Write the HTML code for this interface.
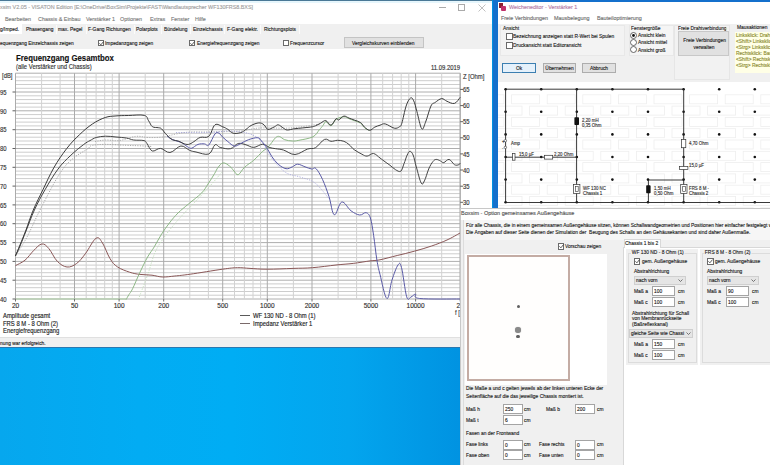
<!DOCTYPE html>
<html><head><meta charset="utf-8"><style>
html,body{margin:0;padding:0;width:770px;height:465px;overflow:hidden;font-family:"Liberation Sans", sans-serif;}
#w{position:absolute;left:0;top:0;width:770px;height:465px;overflow:hidden;}
#w div{-webkit-text-stroke:0.14px currentColor;}
</style></head><body><div id="w">
<div style="position:absolute;left:0px;top:0px;width:770px;height:465px;background:linear-gradient(90deg,#06a7ee 0%,#02acf3 30%,#00adf4 50%,#03a5ee 75%,#0092e1 100%);background-size:465px 465px;background-repeat:no-repeat;background-color:#0090e0;"></div><div style="position:absolute;left:0px;top:0px;width:492px;height:347px;background:#ffffff;"></div><div style="position:absolute;left:0px;top:0px;width:492px;height:1px;background:#4a7896;"></div><div style="position:absolute;left:0px;top:1px;width:492px;height:1.5px;background:#e6f6fc;"></div><div style="position:absolute;left:0px;top:3.9px;font-size:5.94px;line-height:7.1px;color:#a0a0a0;font-weight:normal;white-space:nowrap;transform:scaleX(0.909);transform-origin:left center;">xsim V2.05 - VISATON Edition [E:\OneDrive\BoxSim\Projekte\FAST\Wandlautsprecher WF130FRS8.BXS]</div><div style="position:absolute;left:438.5px;top:7px;width:7px;height:0.8px;background:#aaa;"></div><div style="position:absolute;left:457.5px;top:3.5px;width:7px;height:7px;background:transparent;border:0.8px solid #aaa;box-sizing:border-box;"></div><svg style="position:absolute;left:478px;top:3.5px" width="8" height="8"><path d="M0.5,0.5 L7.5,7.5 M7.5,0.5 L0.5,7.5" stroke="#b0b0b0" stroke-width="0.8"/></svg><div style="position:absolute;left:5px;top:16.2px;font-size:5.94px;line-height:7.1px;color:#7c7c7c;font-weight:normal;white-space:nowrap;transform:scaleX(0.909);transform-origin:left center;">Bearbeiten</div><div style="position:absolute;left:37.5px;top:16.2px;font-size:5.94px;line-height:7.1px;color:#7c7c7c;font-weight:normal;white-space:nowrap;transform:scaleX(0.909);transform-origin:left center;">Chassis &amp; Einbau</div><div style="position:absolute;left:86px;top:16.2px;font-size:5.94px;line-height:7.1px;color:#7c7c7c;font-weight:normal;white-space:nowrap;transform:scaleX(0.909);transform-origin:left center;">Verstärker 1</div><div style="position:absolute;left:120px;top:16.2px;font-size:5.94px;line-height:7.1px;color:#7c7c7c;font-weight:normal;white-space:nowrap;transform:scaleX(0.909);transform-origin:left center;">Optionen</div><div style="position:absolute;left:150px;top:16.2px;font-size:5.94px;line-height:7.1px;color:#7c7c7c;font-weight:normal;white-space:nowrap;transform:scaleX(0.909);transform-origin:left center;">Extras</div><div style="position:absolute;left:170.5px;top:16.2px;font-size:5.94px;line-height:7.1px;color:#7c7c7c;font-weight:normal;white-space:nowrap;transform:scaleX(0.909);transform-origin:left center;">Fenster</div><div style="position:absolute;left:194.5px;top:16.2px;font-size:5.94px;line-height:7.1px;color:#7c7c7c;font-weight:normal;white-space:nowrap;transform:scaleX(0.909);transform-origin:left center;">Hilfe</div><div style="position:absolute;left:0px;top:24px;width:492px;height:10px;background:#f0f0f0;"></div><div style="position:absolute;left:0px;top:24px;width:22px;height:10px;background:#ffffff;"></div><div style="position:absolute;left:55.5px;top:24.5px;width:1px;height:9.5px;background:#fbfbfb;"></div><div style="position:absolute;left:85.5px;top:24.5px;width:1px;height:9.5px;background:#fbfbfb;"></div><div style="position:absolute;left:134px;top:24.5px;width:1px;height:9.5px;background:#fbfbfb;"></div><div style="position:absolute;left:161px;top:24.5px;width:1px;height:9.5px;background:#fbfbfb;"></div><div style="position:absolute;left:190px;top:24.5px;width:1px;height:9.5px;background:#fbfbfb;"></div><div style="position:absolute;left:223.7px;top:24.5px;width:1px;height:9.5px;background:#fbfbfb;"></div><div style="position:absolute;left:260px;top:24.5px;width:1px;height:9.5px;background:#fbfbfb;"></div><div style="position:absolute;left:299px;top:24.5px;width:1px;height:9.5px;background:#fbfbfb;"></div><div style="position:absolute;left:0px;top:26.0px;font-size:5.68px;line-height:6.8px;color:#222;font-weight:normal;white-space:nowrap;transform:scaleX(0.862);transform-origin:left center;">g/Imped.</div><div style="position:absolute;left:25.5px;top:26.0px;font-size:5.68px;line-height:6.8px;color:#222;font-weight:normal;white-space:nowrap;transform:scaleX(0.862);transform-origin:left center;">Phasengang</div><div style="position:absolute;left:58px;top:26.0px;font-size:5.68px;line-height:6.8px;color:#222;font-weight:normal;white-space:nowrap;transform:scaleX(0.862);transform-origin:left center;">max. Pegel</div><div style="position:absolute;left:88px;top:26.0px;font-size:5.68px;line-height:6.8px;color:#222;font-weight:normal;white-space:nowrap;transform:scaleX(0.862);transform-origin:left center;">F-Gang Richtungen</div><div style="position:absolute;left:136px;top:26.0px;font-size:5.68px;line-height:6.8px;color:#222;font-weight:normal;white-space:nowrap;transform:scaleX(0.862);transform-origin:left center;">Polarplots</div><div style="position:absolute;left:164px;top:26.0px;font-size:5.68px;line-height:6.8px;color:#222;font-weight:normal;white-space:nowrap;transform:scaleX(0.862);transform-origin:left center;">Bündelung</div><div style="position:absolute;left:192.5px;top:26.0px;font-size:5.68px;line-height:6.8px;color:#222;font-weight:normal;white-space:nowrap;transform:scaleX(0.862);transform-origin:left center;">Einzelchassis</div><div style="position:absolute;left:226.5px;top:26.0px;font-size:5.68px;line-height:6.8px;color:#222;font-weight:normal;white-space:nowrap;transform:scaleX(0.862);transform-origin:left center;">F-Gang elektr.</div><div style="position:absolute;left:264px;top:26.0px;font-size:5.68px;line-height:6.8px;color:#222;font-weight:normal;white-space:nowrap;transform:scaleX(0.862);transform-origin:left center;">Richtungsplots</div><div style="position:absolute;left:0px;top:34px;width:492px;height:15px;background:#f0f0f0;"></div><div style="position:absolute;left:0px;top:39.8px;font-size:5.68px;line-height:6.8px;color:#222;font-weight:normal;white-space:nowrap;transform:scaleX(0.862);transform-origin:left center;">equenzgang Einzelchassis zeigen</div><div style="position:absolute;left:97.5px;top:39.5px;width:6.8px;height:6.5px;background:#fff;border:0.7px solid #6a6a6a;box-sizing:border-box;"></div><svg style="position:absolute;left:97.5px;top:39.5px" width="7" height="7"><polyline points="1.4,3.3 2.9,4.8 5.5,1.6" fill="none" stroke="#333" stroke-width="0.8"/></svg><div style="position:absolute;left:105px;top:39.8px;font-size:5.68px;line-height:6.8px;color:#222;font-weight:normal;white-space:nowrap;transform:scaleX(0.862);transform-origin:left center;">Impedanzgang zeigen</div><div style="position:absolute;left:188.5px;top:39.5px;width:6.8px;height:6.5px;background:#fff;border:0.7px solid #6a6a6a;box-sizing:border-box;"></div><svg style="position:absolute;left:188.5px;top:39.5px" width="7" height="7"><polyline points="1.4,3.3 2.9,4.8 5.5,1.6" fill="none" stroke="#333" stroke-width="0.8"/></svg><div style="position:absolute;left:196.5px;top:39.8px;font-size:5.68px;line-height:6.8px;color:#222;font-weight:normal;white-space:nowrap;transform:scaleX(0.862);transform-origin:left center;">Energiefrequenzgang zeigen</div><div style="position:absolute;left:282.5px;top:39.5px;width:6.8px;height:6.5px;background:#fff;border:0.7px solid #6a6a6a;box-sizing:border-box;"></div><div style="position:absolute;left:290px;top:39.8px;font-size:5.68px;line-height:6.8px;color:#222;font-weight:normal;white-space:nowrap;transform:scaleX(0.862);transform-origin:left center;">Frequenzcursor</div><div style="position:absolute;left:344.3px;top:37px;width:79.5px;height:11.3px;background:#e1e1e1;border:0.8px solid #c4c4c4;box-sizing:border-box;"></div><div style="position:absolute;left:351.5px;top:39.8px;font-size:5.68px;line-height:6.8px;color:#222;font-weight:normal;white-space:nowrap;transform:scaleX(0.862);transform-origin:left center;">Vergleichskurven einblenden</div><svg width="770" height="465" style="position:absolute;left:0;top:0">
<line x1="15.5" y1="299.0" x2="460.2" y2="299.0" stroke="#aeaeae" stroke-width="1"/>
<line x1="15.5" y1="295.2" x2="460.2" y2="295.2" stroke="#cdcdcd" stroke-width="1"/>
<line x1="15.5" y1="291.5" x2="460.2" y2="291.5" stroke="#cdcdcd" stroke-width="1"/>
<line x1="15.5" y1="287.7" x2="460.2" y2="287.7" stroke="#cdcdcd" stroke-width="1"/>
<line x1="15.5" y1="283.9" x2="460.2" y2="283.9" stroke="#cdcdcd" stroke-width="1"/>
<line x1="15.5" y1="280.2" x2="460.2" y2="280.2" stroke="#aeaeae" stroke-width="1"/>
<line x1="15.5" y1="276.4" x2="460.2" y2="276.4" stroke="#cdcdcd" stroke-width="1"/>
<line x1="15.5" y1="272.7" x2="460.2" y2="272.7" stroke="#cdcdcd" stroke-width="1"/>
<line x1="15.5" y1="268.9" x2="460.2" y2="268.9" stroke="#cdcdcd" stroke-width="1"/>
<line x1="15.5" y1="265.1" x2="460.2" y2="265.1" stroke="#cdcdcd" stroke-width="1"/>
<line x1="15.5" y1="261.4" x2="460.2" y2="261.4" stroke="#aeaeae" stroke-width="1"/>
<line x1="15.5" y1="257.6" x2="460.2" y2="257.6" stroke="#cdcdcd" stroke-width="1"/>
<line x1="15.5" y1="253.8" x2="460.2" y2="253.8" stroke="#cdcdcd" stroke-width="1"/>
<line x1="15.5" y1="250.1" x2="460.2" y2="250.1" stroke="#cdcdcd" stroke-width="1"/>
<line x1="15.5" y1="246.3" x2="460.2" y2="246.3" stroke="#cdcdcd" stroke-width="1"/>
<line x1="15.5" y1="242.6" x2="460.2" y2="242.6" stroke="#aeaeae" stroke-width="1"/>
<line x1="15.5" y1="238.8" x2="460.2" y2="238.8" stroke="#cdcdcd" stroke-width="1"/>
<line x1="15.5" y1="235.0" x2="460.2" y2="235.0" stroke="#cdcdcd" stroke-width="1"/>
<line x1="15.5" y1="231.3" x2="460.2" y2="231.3" stroke="#cdcdcd" stroke-width="1"/>
<line x1="15.5" y1="227.5" x2="460.2" y2="227.5" stroke="#cdcdcd" stroke-width="1"/>
<line x1="15.5" y1="223.7" x2="460.2" y2="223.7" stroke="#aeaeae" stroke-width="1"/>
<line x1="15.5" y1="220.0" x2="460.2" y2="220.0" stroke="#cdcdcd" stroke-width="1"/>
<line x1="15.5" y1="216.2" x2="460.2" y2="216.2" stroke="#cdcdcd" stroke-width="1"/>
<line x1="15.5" y1="212.5" x2="460.2" y2="212.5" stroke="#cdcdcd" stroke-width="1"/>
<line x1="15.5" y1="208.7" x2="460.2" y2="208.7" stroke="#cdcdcd" stroke-width="1"/>
<line x1="15.5" y1="204.9" x2="460.2" y2="204.9" stroke="#aeaeae" stroke-width="1"/>
<line x1="15.5" y1="201.2" x2="460.2" y2="201.2" stroke="#cdcdcd" stroke-width="1"/>
<line x1="15.5" y1="197.4" x2="460.2" y2="197.4" stroke="#cdcdcd" stroke-width="1"/>
<line x1="15.5" y1="193.6" x2="460.2" y2="193.6" stroke="#cdcdcd" stroke-width="1"/>
<line x1="15.5" y1="189.9" x2="460.2" y2="189.9" stroke="#cdcdcd" stroke-width="1"/>
<line x1="15.5" y1="186.1" x2="460.2" y2="186.1" stroke="#aeaeae" stroke-width="1"/>
<line x1="15.5" y1="182.3" x2="460.2" y2="182.3" stroke="#cdcdcd" stroke-width="1"/>
<line x1="15.5" y1="178.6" x2="460.2" y2="178.6" stroke="#cdcdcd" stroke-width="1"/>
<line x1="15.5" y1="174.8" x2="460.2" y2="174.8" stroke="#cdcdcd" stroke-width="1"/>
<line x1="15.5" y1="171.1" x2="460.2" y2="171.1" stroke="#cdcdcd" stroke-width="1"/>
<line x1="15.5" y1="167.3" x2="460.2" y2="167.3" stroke="#aeaeae" stroke-width="1"/>
<line x1="15.5" y1="163.5" x2="460.2" y2="163.5" stroke="#cdcdcd" stroke-width="1"/>
<line x1="15.5" y1="159.8" x2="460.2" y2="159.8" stroke="#cdcdcd" stroke-width="1"/>
<line x1="15.5" y1="156.0" x2="460.2" y2="156.0" stroke="#cdcdcd" stroke-width="1"/>
<line x1="15.5" y1="152.2" x2="460.2" y2="152.2" stroke="#cdcdcd" stroke-width="1"/>
<line x1="15.5" y1="148.5" x2="460.2" y2="148.5" stroke="#aeaeae" stroke-width="1"/>
<line x1="15.5" y1="144.7" x2="460.2" y2="144.7" stroke="#cdcdcd" stroke-width="1"/>
<line x1="15.5" y1="141.0" x2="460.2" y2="141.0" stroke="#cdcdcd" stroke-width="1"/>
<line x1="15.5" y1="137.2" x2="460.2" y2="137.2" stroke="#cdcdcd" stroke-width="1"/>
<line x1="15.5" y1="133.4" x2="460.2" y2="133.4" stroke="#cdcdcd" stroke-width="1"/>
<line x1="15.5" y1="129.7" x2="460.2" y2="129.7" stroke="#aeaeae" stroke-width="1"/>
<line x1="15.5" y1="125.9" x2="460.2" y2="125.9" stroke="#cdcdcd" stroke-width="1"/>
<line x1="15.5" y1="122.1" x2="460.2" y2="122.1" stroke="#cdcdcd" stroke-width="1"/>
<line x1="15.5" y1="118.4" x2="460.2" y2="118.4" stroke="#cdcdcd" stroke-width="1"/>
<line x1="15.5" y1="114.6" x2="460.2" y2="114.6" stroke="#cdcdcd" stroke-width="1"/>
<line x1="15.5" y1="110.8" x2="460.2" y2="110.8" stroke="#aeaeae" stroke-width="1"/>
<line x1="15.5" y1="107.1" x2="460.2" y2="107.1" stroke="#cdcdcd" stroke-width="1"/>
<line x1="15.5" y1="103.3" x2="460.2" y2="103.3" stroke="#cdcdcd" stroke-width="1"/>
<line x1="15.5" y1="99.6" x2="460.2" y2="99.6" stroke="#cdcdcd" stroke-width="1"/>
<line x1="15.5" y1="95.8" x2="460.2" y2="95.8" stroke="#cdcdcd" stroke-width="1"/>
<line x1="15.5" y1="92.0" x2="460.2" y2="92.0" stroke="#aeaeae" stroke-width="1"/>
<line x1="15.5" y1="88.3" x2="460.2" y2="88.3" stroke="#cdcdcd" stroke-width="1"/>
<line x1="15.5" y1="84.5" x2="460.2" y2="84.5" stroke="#cdcdcd" stroke-width="1"/>
<line x1="15.5" y1="80.7" x2="460.2" y2="80.7" stroke="#cdcdcd" stroke-width="1"/>
<line x1="15.5" y1="77.0" x2="460.2" y2="77.0" stroke="#cdcdcd" stroke-width="1"/>
<line x1="15.5" y1="73.2" x2="460.2" y2="73.2" stroke="#aeaeae" stroke-width="1"/>
<line x1="15.5" y1="73.2" x2="15.5" y2="299" stroke="#ababab" stroke-width="1"/>
<line x1="41.6" y1="73.2" x2="41.6" y2="299" stroke="#d2d2d2" stroke-width="1"/>
<line x1="60.1" y1="73.2" x2="60.1" y2="299" stroke="#d2d2d2" stroke-width="1"/>
<line x1="74.5" y1="73.2" x2="74.5" y2="299" stroke="#ababab" stroke-width="1"/>
<line x1="86.2" y1="73.2" x2="86.2" y2="299" stroke="#d2d2d2" stroke-width="1"/>
<line x1="96.1" y1="73.2" x2="96.1" y2="299" stroke="#d2d2d2" stroke-width="1"/>
<line x1="104.7" y1="73.2" x2="104.7" y2="299" stroke="#d2d2d2" stroke-width="1"/>
<line x1="112.3" y1="73.2" x2="112.3" y2="299" stroke="#d2d2d2" stroke-width="1"/>
<line x1="119.1" y1="73.2" x2="119.1" y2="299" stroke="#ababab" stroke-width="1"/>
<line x1="145.2" y1="73.2" x2="145.2" y2="299" stroke="#d2d2d2" stroke-width="1"/>
<line x1="163.7" y1="73.2" x2="163.7" y2="299" stroke="#ababab" stroke-width="1"/>
<line x1="189.8" y1="73.2" x2="189.8" y2="299" stroke="#d2d2d2" stroke-width="1"/>
<line x1="208.4" y1="73.2" x2="208.4" y2="299" stroke="#d2d2d2" stroke-width="1"/>
<line x1="222.7" y1="73.2" x2="222.7" y2="299" stroke="#ababab" stroke-width="1"/>
<line x1="234.5" y1="73.2" x2="234.5" y2="299" stroke="#d2d2d2" stroke-width="1"/>
<line x1="244.4" y1="73.2" x2="244.4" y2="299" stroke="#d2d2d2" stroke-width="1"/>
<line x1="253.0" y1="73.2" x2="253.0" y2="299" stroke="#d2d2d2" stroke-width="1"/>
<line x1="260.6" y1="73.2" x2="260.6" y2="299" stroke="#d2d2d2" stroke-width="1"/>
<line x1="267.3" y1="73.2" x2="267.3" y2="299" stroke="#ababab" stroke-width="1"/>
<line x1="293.4" y1="73.2" x2="293.4" y2="299" stroke="#d2d2d2" stroke-width="1"/>
<line x1="312.0" y1="73.2" x2="312.0" y2="299" stroke="#ababab" stroke-width="1"/>
<line x1="338.1" y1="73.2" x2="338.1" y2="299" stroke="#d2d2d2" stroke-width="1"/>
<line x1="356.6" y1="73.2" x2="356.6" y2="299" stroke="#d2d2d2" stroke-width="1"/>
<line x1="370.9" y1="73.2" x2="370.9" y2="299" stroke="#ababab" stroke-width="1"/>
<line x1="382.7" y1="73.2" x2="382.7" y2="299" stroke="#d2d2d2" stroke-width="1"/>
<line x1="392.6" y1="73.2" x2="392.6" y2="299" stroke="#d2d2d2" stroke-width="1"/>
<line x1="401.2" y1="73.2" x2="401.2" y2="299" stroke="#d2d2d2" stroke-width="1"/>
<line x1="408.8" y1="73.2" x2="408.8" y2="299" stroke="#d2d2d2" stroke-width="1"/>
<line x1="415.6" y1="73.2" x2="415.6" y2="299" stroke="#ababab" stroke-width="1"/>
<line x1="441.7" y1="73.2" x2="441.7" y2="299" stroke="#d2d2d2" stroke-width="1"/>
<line x1="460.2" y1="73.2" x2="460.2" y2="299" stroke="#ababab" stroke-width="1"/>
<line x1="460.2" y1="73.2" x2="460.2" y2="299" stroke="#ababab" stroke-width="1"/>
<path d="M15.4,256.0 C17.5,252.6 22.4,245.6 27.0,237.0 C31.6,228.4 35.1,219.3 41.0,208.0 C46.9,196.7 53.8,182.8 59.5,174.0 C65.2,165.2 67.4,163.5 72.4,159.0 C77.4,154.5 83.9,151.4 87.4,149.0 C90.9,146.6 88.7,146.3 92.0,145.5 C95.3,144.7 99.4,144.4 105.6,144.4 C111.8,144.4 120.2,145.0 126.4,145.3 C132.6,145.6 135.4,145.6 140.0,145.8 C144.6,146.0 149.8,146.4 152.0,146.5" fill="none" stroke="#a0a0a0" stroke-width="0.9" stroke-linejoin="round" stroke-opacity="1" stroke-dasharray="1.2,1.3"/>
<path d="M95.0,141.6 C96.9,141.3 101.3,140.2 105.6,140.0 C109.9,139.8 113.6,141.2 119.0,140.6 C124.4,140.0 130.5,137.0 135.7,136.4 C140.9,135.8 143.1,137.4 148.0,137.5 C152.9,137.6 158.0,137.6 163.0,137.0 C168.0,136.4 171.1,134.9 176.0,134.0 C180.9,133.1 183.9,132.4 190.0,132.0 C196.1,131.6 201.0,132.1 210.0,131.9 C219.0,131.7 231.0,131.7 240.0,131.0 C249.0,130.3 251.0,128.5 260.0,128.0 C269.0,127.5 279.2,128.7 290.0,128.0 C300.8,127.3 314.6,124.7 320.0,124.0" fill="none" stroke="#a8a8a8" stroke-width="0.9" stroke-linejoin="round" stroke-opacity="1" stroke-dasharray="1.2,1.3"/>
<path d="M176.0,132.5 C182.1,132.5 200.3,132.8 210.0,132.5 C219.7,132.2 222.8,130.7 230.0,131.0 C237.2,131.3 244.2,132.0 250.0,134.0 C255.8,136.0 258.4,138.0 262.0,142.0 C265.6,146.0 265.9,150.6 270.0,156.0 C274.1,161.4 279.6,168.2 285.0,172.0 C290.4,175.8 294.6,175.0 300.0,177.0 C305.4,179.0 309.6,178.9 315.0,183.0 C320.4,187.1 327.3,196.9 330.0,200.0" fill="none" stroke="#a8a8dc" stroke-width="0.9" stroke-linejoin="round" stroke-opacity="1" stroke-dasharray="1.2,1.3"/>
<path d="M138.5,299.0 C140.1,294.7 144.6,283.4 147.6,275.0 C150.6,266.6 152.0,259.4 155.0,252.6 C158.0,245.8 159.9,243.4 164.0,237.5 C168.1,231.6 172.4,226.4 178.0,220.0 C183.6,213.6 189.2,208.1 195.0,202.0 C200.8,195.9 205.1,191.4 210.0,186.0 C214.9,180.6 219.8,174.5 222.0,172.0" fill="none" stroke="#c0dcb8" stroke-width="0.9" stroke-linejoin="round" stroke-opacity="1" stroke-dasharray="1.2,1.3"/>
<path d="M15.5,265.6 C17.2,264.6 21.7,262.9 25.0,260.2 C28.3,257.5 30.7,253.4 33.7,250.5 C36.7,247.6 39.1,244.4 41.8,244.0 C44.5,243.6 45.9,245.3 48.7,248.4 C51.5,251.5 54.0,258.0 57.3,261.3 C60.6,264.6 63.5,266.6 67.0,267.0 C70.5,267.4 73.4,265.8 76.7,263.4 C80.0,261.0 81.8,258.3 85.3,253.8 C88.8,249.3 92.9,240.2 96.0,238.3 C99.1,236.4 100.0,239.3 102.5,243.0 C105.0,246.7 107.3,254.3 110.0,258.6 C112.7,262.9 114.0,264.5 117.5,266.9 C121.0,269.3 125.5,270.8 129.6,272.2 C133.7,273.6 136.0,273.9 140.0,274.4 C144.0,274.9 147.9,274.7 152.0,275.2 C156.1,275.7 158.6,276.9 162.7,277.0 C166.8,277.1 169.9,276.5 174.8,276.0 C179.8,275.5 181.6,275.4 190.2,274.2 C198.8,273.0 214.0,270.4 222.5,269.2 C231.0,268.0 232.6,267.8 237.5,267.7 C242.4,267.6 244.7,268.1 250.0,268.4 C255.3,268.7 259.5,269.2 267.2,269.2 C274.9,269.2 284.9,268.7 293.0,268.4 C301.1,268.1 304.7,268.3 312.4,267.7 C320.1,267.1 328.7,265.8 336.0,265.0 C343.3,264.2 347.1,264.1 353.2,263.4 C359.3,262.7 365.2,261.5 370.0,260.9 C374.8,260.3 375.1,260.8 380.0,259.8 C384.9,258.8 391.0,257.0 397.2,255.5 C403.4,254.0 408.2,252.9 414.4,251.2 C420.6,249.5 425.7,248.0 431.6,246.0 C437.5,244.0 441.9,242.3 447.0,240.0 C452.1,237.7 457.7,234.3 460.0,233.0" fill="none" stroke="#8a5858" stroke-width="1.0" stroke-linejoin="round" stroke-opacity="1"/>
<line x1="15.5" y1="299" x2="126.5" y2="299" stroke="#a8cca0" stroke-width="1.2"/>
<path d="M126.2,299.5 C126.7,298.6 127.8,296.4 129.0,294.5 C130.2,292.6 130.6,292.7 132.6,288.7 C134.6,284.7 137.3,277.9 140.0,272.2 C142.7,266.5 145.0,261.6 147.6,257.0 C150.2,252.4 151.9,250.8 154.3,246.8 C156.7,242.8 158.3,239.3 161.0,235.0 C163.7,230.7 166.3,227.0 169.4,223.0 C172.5,219.0 174.5,216.5 178.0,213.0 C181.5,209.5 184.5,207.4 188.7,203.8 C192.9,200.2 198.1,196.6 201.6,193.0 C205.1,189.4 205.7,187.5 208.0,184.0 C210.3,180.5 212.7,176.7 214.5,173.7 C216.3,170.7 216.5,169.4 218.0,167.5 C219.5,165.6 221.0,163.2 223.1,162.9 C225.2,162.6 227.6,164.6 229.6,166.1 C231.6,167.6 232.5,169.5 234.0,171.0 C235.5,172.5 236.3,175.4 238.2,174.7 C240.1,174.0 241.8,169.8 244.6,167.2 C247.4,164.6 250.4,163.2 253.7,160.3 C257.0,157.4 260.4,153.4 262.7,151.3 C265.0,149.2 265.2,150.0 266.6,148.7 C268.0,147.4 268.9,146.2 270.5,144.2 C272.1,142.2 274.0,139.1 275.6,137.7 C277.2,136.3 277.9,136.1 279.5,136.5 C281.1,136.9 282.4,138.9 284.7,139.7 C287.0,140.5 289.8,140.9 292.4,141.0 C295.0,141.1 295.2,141.1 298.9,140.3 C302.6,139.5 309.2,138.7 312.9,136.8 C316.6,134.9 317.5,131.8 319.4,129.7 C321.3,127.6 322.0,126.7 323.2,125.2 C324.4,123.7 324.6,121.5 326.0,121.6 C327.4,121.7 329.2,126.2 331.0,125.8 C332.8,125.4 333.8,120.9 336.1,119.3 C338.4,117.7 341.6,116.9 343.9,116.8 C346.2,116.7 347.1,118.0 349.0,118.7 C350.9,119.4 352.1,119.8 354.2,120.6 C356.3,121.4 358.7,121.9 360.6,123.2 C362.5,124.5 362.9,126.4 364.5,127.7 C366.1,129.0 368.5,130.0 369.4,130.5" fill="none" stroke="#88b480" stroke-width="0.95" stroke-linejoin="round" stroke-opacity="1"/>
<path d="M15.4,256.0 C16.2,254.2 18.1,250.5 20.0,246.0 C21.9,241.5 23.4,237.5 26.0,231.0 C28.6,224.5 31.0,217.5 34.4,210.0 C37.8,202.5 40.9,197.0 45.1,189.6 C49.3,182.2 53.4,175.3 58.0,169.1 C62.6,162.9 66.3,159.6 70.9,155.2 C75.5,150.8 80.4,147.0 83.8,144.4 C87.2,141.8 87.8,141.8 90.0,140.6 C92.2,139.4 93.4,138.3 96.2,137.5 C99.0,136.7 102.0,136.3 105.6,136.2 C109.2,136.1 112.3,136.7 116.0,137.0 C119.7,137.3 123.2,137.5 126.4,138.0 C129.6,138.5 130.4,139.5 133.6,140.0 C136.8,140.5 141.6,139.9 144.0,140.6 C146.4,141.3 145.6,141.8 147.1,143.7 C148.6,145.6 149.9,150.2 152.3,151.0 C154.7,151.8 157.4,148.1 160.6,148.4 C163.8,148.7 166.3,152.9 170.0,152.5 C173.7,152.1 177.4,146.4 180.9,146.0 C184.4,145.6 186.8,149.2 189.5,150.3 C192.2,151.4 192.5,151.3 196.0,152.0 C199.5,152.7 205.4,155.3 208.8,154.0 C212.2,152.7 212.9,146.0 215.0,144.8 C217.1,143.6 217.4,146.7 220.2,147.4 C223.0,148.1 227.3,149.4 230.5,148.7 C233.7,148.0 235.4,144.2 238.2,143.5 C241.0,142.8 243.2,144.1 246.0,144.8 C248.8,145.5 250.7,147.5 253.7,147.4 C256.7,147.3 259.9,144.2 262.7,144.2 C265.5,144.2 266.9,146.6 269.2,147.4 C271.5,148.2 273.0,148.2 275.6,148.7 C278.2,149.2 279.9,149.0 283.4,150.0 C286.9,151.0 290.6,154.7 295.0,154.5 C299.4,154.3 304.0,150.2 307.7,149.0 C311.4,147.8 312.5,149.4 315.5,147.7 C318.5,146.0 321.7,140.6 324.5,139.4 C327.3,138.2 328.7,141.1 331.0,141.3 C333.3,141.5 335.1,140.3 337.4,140.3 C339.7,140.3 341.8,140.5 343.9,141.3 C346.0,142.1 347.1,143.0 349.0,144.5 C350.9,146.0 351.9,148.0 354.2,149.7 C356.5,151.4 359.6,153.0 361.9,154.2 C364.2,155.4 365.0,156.2 367.1,156.1 C369.2,156.0 371.2,153.2 373.5,153.5 C375.8,153.8 378.1,156.7 380.0,158.0 C381.9,159.3 382.2,159.7 384.0,161.0 C385.8,162.3 387.9,163.8 390.0,165.3 C392.1,166.8 393.5,168.5 395.4,169.6 C397.3,170.7 399.3,172.3 400.8,171.2 C402.3,170.1 402.8,166.6 404.0,163.7 C405.2,160.8 406.1,157.2 407.2,155.0 C408.3,152.8 408.8,151.3 409.9,151.3 C411.0,151.3 411.9,152.2 413.1,155.0 C414.3,157.8 414.8,161.9 416.3,166.9 C417.8,171.9 419.7,180.5 421.2,183.0 C422.7,185.5 423.0,183.4 424.4,180.9 C425.8,178.4 427.2,172.5 428.7,169.0 C430.2,165.5 431.6,163.2 433.0,161.5 C434.4,159.8 434.8,159.5 436.2,159.4 C437.6,159.3 439.1,160.4 440.5,161.0 C441.9,161.6 442.3,162.9 443.8,162.6 C445.3,162.3 447.2,159.0 449.1,159.4 C451.0,159.8 452.8,163.7 454.5,164.7 C456.2,165.7 457.8,165.0 458.8,164.7 C459.8,164.4 459.9,163.4 460.2,163.1" fill="none" stroke="#444444" stroke-width="1.0" stroke-linejoin="round" stroke-opacity="1"/>
<path d="M167.0,135.8 C168.0,136.5 169.8,138.4 172.3,139.6 C174.8,140.8 178.2,141.0 180.9,142.3 C183.6,143.6 185.4,145.5 187.3,146.6 C189.2,147.7 189.7,148.6 191.6,148.2 C193.5,147.8 195.7,145.2 198.0,144.4 C200.3,143.6 202.6,143.8 204.5,143.9 C206.4,144.0 206.9,146.8 208.8,145.0 C210.7,143.2 213.2,136.0 215.0,133.9 C216.8,131.8 217.5,132.6 218.9,133.2 C220.3,133.8 221.1,135.6 222.7,137.1 C224.3,138.6 225.8,140.0 227.9,141.6 C230.0,143.2 232.1,145.8 234.4,146.1 C236.7,146.4 238.3,144.7 240.8,143.5 C243.3,142.3 245.5,140.7 248.5,139.7 C251.5,138.7 255.3,137.5 257.6,137.7 C259.9,137.9 259.9,139.3 261.5,141.0 C263.1,142.7 264.7,144.6 266.6,147.4 C268.5,150.2 269.7,153.5 271.8,156.5 C273.9,159.5 275.6,162.0 278.2,164.2 C280.8,166.4 283.4,168.2 286.0,168.7 C288.6,169.2 290.3,167.6 292.4,166.8 C294.5,166.0 295.3,164.2 297.6,164.2 C299.9,164.2 302.5,165.9 305.0,166.8 C307.5,167.7 309.7,168.7 311.7,169.0 C313.7,169.3 314.1,166.7 316.0,168.6 C317.9,170.5 320.2,174.4 322.5,179.4 C324.8,184.4 326.9,190.2 329.0,196.6 C331.1,203.0 332.0,213.8 334.3,214.8 C336.6,215.8 338.8,202.7 341.8,202.0 C344.8,201.3 347.8,208.5 351.0,210.8 C354.2,213.1 357.0,214.7 359.7,215.0 C362.4,215.3 364.1,212.2 366.0,212.7 C367.9,213.2 369.0,213.9 370.4,218.0 C371.8,222.1 372.4,227.7 373.6,235.3 C374.8,242.9 375.7,253.0 376.9,260.0 C378.1,267.0 378.2,267.5 380.0,274.4 C381.8,281.3 384.7,297.5 386.9,298.5 C389.1,299.5 390.0,286.0 392.0,280.0 C394.0,274.0 396.3,267.2 398.0,265.0 C399.7,262.8 399.9,261.8 401.5,267.5 C403.1,273.2 405.0,291.5 406.7,296.8 C408.4,302.1 409.4,297.5 411.0,297.0 C412.6,296.5 414.1,293.9 415.6,294.2 C417.1,294.5 411.6,297.6 419.6,298.5 C427.6,299.4 452.9,298.9 460.2,299.0" fill="none" stroke="#5a5aa6" stroke-width="1.0" stroke-linejoin="round" stroke-opacity="1"/>
<path d="M15.4,256.0 C16.2,254.0 18.1,249.7 20.0,245.0 C21.9,240.3 23.6,236.3 26.0,230.0 C28.4,223.7 30.2,217.3 33.3,210.0 C36.4,202.7 39.3,197.2 43.0,189.6 C46.7,182.0 49.5,175.4 53.7,168.0 C57.9,160.6 62.0,154.7 66.6,148.7 C71.2,142.7 74.9,139.1 79.5,134.7 C84.1,130.3 87.8,127.1 92.4,124.0 C97.0,120.9 101.2,118.9 105.3,117.5 C109.4,116.1 110.9,116.4 115.0,116.0 C119.1,115.6 123.0,115.6 128.3,115.5 C133.6,115.4 140.6,114.4 144.3,115.4 C148.0,116.4 147.1,118.8 148.6,120.8 C150.1,122.8 150.7,125.5 152.4,126.7 C154.1,127.9 156.7,127.3 158.3,127.7 C159.9,128.1 159.9,127.4 161.5,128.8 C163.1,130.2 165.1,133.4 167.0,135.3 C168.9,137.2 170.2,138.5 172.3,139.6 C174.4,140.7 176.8,140.5 178.7,141.2 C180.6,141.9 181.3,142.7 183.0,143.3 C184.7,143.9 186.5,144.7 188.4,144.4 C190.3,144.1 191.7,143.0 193.8,141.7 C195.9,140.4 197.5,138.4 200.2,137.4 C202.9,136.4 206.1,138.6 208.8,136.3 C211.5,134.0 212.5,126.5 215.0,124.8 C217.5,123.1 220.4,126.0 222.7,126.8 C225.0,127.6 226.0,128.2 227.9,129.4 C229.8,130.6 230.8,132.6 233.1,133.2 C235.4,133.8 238.5,133.3 240.8,132.6 C243.1,131.9 244.1,130.7 246.0,129.4 C247.9,128.1 248.8,126.7 251.1,125.5 C253.4,124.3 256.6,123.0 258.9,122.9 C261.2,122.8 262.4,123.6 264.0,124.8 C265.6,126.0 266.0,129.0 267.9,129.4 C269.8,129.8 272.5,127.6 274.4,126.8 C276.3,126.0 276.6,124.6 278.2,124.8 C279.8,125.0 281.8,127.2 283.4,128.1 C285.0,129.0 285.2,129.9 287.3,130.0 C289.4,130.1 290.9,129.2 295.0,128.7 C299.1,128.2 306.6,127.6 310.3,127.1 C314.0,126.6 313.6,126.5 315.5,125.8 C317.4,125.1 318.7,124.1 320.6,123.2 C322.5,122.3 323.9,120.2 325.8,120.6 C327.7,121.0 329.1,125.5 331.0,125.2 C332.9,124.9 334.7,119.6 336.1,118.7 C337.5,117.8 337.3,120.5 338.7,120.0 C340.1,119.5 342.0,116.4 343.9,116.1 C345.8,115.8 347.1,117.4 349.0,118.1 C350.9,118.8 352.1,119.2 354.2,120.0 C356.3,120.8 358.7,121.3 360.6,122.6 C362.5,123.9 362.9,125.7 364.5,127.1 C366.1,128.5 367.8,130.3 369.7,130.3 C371.6,130.3 372.9,128.0 374.8,127.1 C376.7,126.2 378.1,125.8 380.0,125.2 C381.9,124.6 382.6,123.4 385.2,123.9 C387.8,124.4 391.7,127.7 394.3,128.2 C396.9,128.7 398.3,127.5 399.7,126.6 C401.1,125.7 400.6,127.0 401.8,123.3 C403.0,119.6 404.6,110.6 406.1,106.1 C407.6,101.6 409.0,99.1 410.4,98.1 C411.8,97.1 412.5,98.4 413.7,100.8 C414.9,103.2 415.5,106.5 416.9,111.5 C418.3,116.5 420.2,126.8 421.7,128.7 C423.2,130.6 423.8,126.4 425.5,122.3 C427.2,118.2 429.2,109.7 430.9,106.1 C432.6,102.5 433.3,103.8 435.2,102.4 C437.1,101.1 439.5,98.8 441.6,98.6 C443.7,98.4 444.7,100.4 447.0,101.3 C449.3,102.2 452.1,104.1 454.5,103.4 C456.9,102.7 459.2,98.4 460.2,97.3" fill="none" stroke="#3c3c3c" stroke-width="1.0" stroke-linejoin="round" stroke-opacity="1"/>
<line x1="12.5" y1="299.0" x2="15.5" y2="299.0" stroke="#606060" stroke-width="1"/>
<line x1="12.5" y1="280.2" x2="15.5" y2="280.2" stroke="#606060" stroke-width="1"/>
<line x1="12.5" y1="261.4" x2="15.5" y2="261.4" stroke="#606060" stroke-width="1"/>
<line x1="12.5" y1="242.6" x2="15.5" y2="242.6" stroke="#606060" stroke-width="1"/>
<line x1="12.5" y1="223.7" x2="15.5" y2="223.7" stroke="#606060" stroke-width="1"/>
<line x1="12.5" y1="204.9" x2="15.5" y2="204.9" stroke="#606060" stroke-width="1"/>
<line x1="12.5" y1="186.1" x2="15.5" y2="186.1" stroke="#606060" stroke-width="1"/>
<line x1="12.5" y1="167.3" x2="15.5" y2="167.3" stroke="#606060" stroke-width="1"/>
<line x1="12.5" y1="148.5" x2="15.5" y2="148.5" stroke="#606060" stroke-width="1"/>
<line x1="12.5" y1="129.7" x2="15.5" y2="129.7" stroke="#606060" stroke-width="1"/>
<line x1="12.5" y1="110.8" x2="15.5" y2="110.8" stroke="#606060" stroke-width="1"/>
<line x1="12.5" y1="92.0" x2="15.5" y2="92.0" stroke="#606060" stroke-width="1"/>
<line x1="15.5" y1="299" x2="15.5" y2="301.5" stroke="#707070" stroke-width="1"/>
<line x1="74.5" y1="299" x2="74.5" y2="301.5" stroke="#707070" stroke-width="1"/>
<line x1="119.1" y1="299" x2="119.1" y2="301.5" stroke="#707070" stroke-width="1"/>
<line x1="163.7" y1="299" x2="163.7" y2="301.5" stroke="#707070" stroke-width="1"/>
<line x1="222.7" y1="299" x2="222.7" y2="301.5" stroke="#707070" stroke-width="1"/>
<line x1="267.3" y1="299" x2="267.3" y2="301.5" stroke="#707070" stroke-width="1"/>
<line x1="312.0" y1="299" x2="312.0" y2="301.5" stroke="#707070" stroke-width="1"/>
<line x1="370.9" y1="299" x2="370.9" y2="301.5" stroke="#707070" stroke-width="1"/>
<line x1="415.6" y1="299" x2="415.6" y2="301.5" stroke="#707070" stroke-width="1"/>
<line x1="460.2" y1="299" x2="460.2" y2="301.5" stroke="#707070" stroke-width="1"/>
<line x1="460.2" y1="282.9" x2="463.2" y2="282.9" stroke="#606060" stroke-width="1"/>
<line x1="460.2" y1="266.8" x2="463.2" y2="266.8" stroke="#606060" stroke-width="1"/>
<line x1="460.2" y1="250.6" x2="463.2" y2="250.6" stroke="#606060" stroke-width="1"/>
<line x1="460.2" y1="234.5" x2="463.2" y2="234.5" stroke="#606060" stroke-width="1"/>
<line x1="460.2" y1="218.4" x2="463.2" y2="218.4" stroke="#606060" stroke-width="1"/>
<line x1="460.2" y1="202.3" x2="463.2" y2="202.3" stroke="#606060" stroke-width="1"/>
<line x1="460.2" y1="186.2" x2="463.2" y2="186.2" stroke="#606060" stroke-width="1"/>
<line x1="460.2" y1="170.0" x2="463.2" y2="170.0" stroke="#606060" stroke-width="1"/>
<line x1="460.2" y1="153.9" x2="463.2" y2="153.9" stroke="#606060" stroke-width="1"/>
<line x1="460.2" y1="137.8" x2="463.2" y2="137.8" stroke="#606060" stroke-width="1"/>
<line x1="460.2" y1="121.7" x2="463.2" y2="121.7" stroke="#606060" stroke-width="1"/>
<line x1="460.2" y1="105.6" x2="463.2" y2="105.6" stroke="#606060" stroke-width="1"/>
<line x1="460.2" y1="89.4" x2="463.2" y2="89.4" stroke="#606060" stroke-width="1"/>
</svg><div style="position:absolute;left:15.5px;top:53.7px;font-size:7.80px;line-height:9.4px;color:#111;font-weight:bold;white-space:nowrap;transform:scaleX(0.91);transform-origin:left center;font-size:8.57px;top:54.1px;line-height:9px;">Frequenzgang Gesamtbox</div><div style="position:absolute;left:15.5px;top:63.3px;font-size:6.49px;line-height:7.8px;color:#333;font-weight:normal;white-space:nowrap;transform:scaleX(0.909);transform-origin:left center;">(alle Verstärker und Chassis)</div><div style="position:absolute;left:431px;top:63.6px;font-size:6.49px;line-height:7.8px;color:#333;font-weight:normal;white-space:nowrap;transform:scaleX(0.909);transform-origin:left center;">11.09.2019</div><div style="position:absolute;left:2px;top:72.2px;font-size:6.49px;line-height:7.8px;color:#333;font-weight:normal;white-space:nowrap;transform:scaleX(0.909);transform-origin:left center;">[dB]</div><div style="position:absolute;left:463px;top:72.6px;font-size:6.49px;line-height:7.8px;color:#333;font-weight:normal;white-space:nowrap;transform:scaleX(0.909);transform-origin:left center;">Z [Ohm]</div><div style="position:absolute;left:0px;top:295.6px;font-size:6.49px;line-height:7.8px;color:#333;font-weight:normal;white-space:nowrap;transform:scaleX(0.909);transform-origin:left center;">40</div><div style="position:absolute;left:0px;top:276.8px;font-size:6.49px;line-height:7.8px;color:#333;font-weight:normal;white-space:nowrap;transform:scaleX(0.909);transform-origin:left center;">45</div><div style="position:absolute;left:0px;top:258.0px;font-size:6.49px;line-height:7.8px;color:#333;font-weight:normal;white-space:nowrap;transform:scaleX(0.909);transform-origin:left center;">50</div><div style="position:absolute;left:0px;top:239.2px;font-size:6.49px;line-height:7.8px;color:#333;font-weight:normal;white-space:nowrap;transform:scaleX(0.909);transform-origin:left center;">55</div><div style="position:absolute;left:0px;top:220.4px;font-size:6.49px;line-height:7.8px;color:#333;font-weight:normal;white-space:nowrap;transform:scaleX(0.909);transform-origin:left center;">60</div><div style="position:absolute;left:0px;top:201.6px;font-size:6.49px;line-height:7.8px;color:#333;font-weight:normal;white-space:nowrap;transform:scaleX(0.909);transform-origin:left center;">65</div><div style="position:absolute;left:0px;top:182.7px;font-size:6.49px;line-height:7.8px;color:#333;font-weight:normal;white-space:nowrap;transform:scaleX(0.909);transform-origin:left center;">70</div><div style="position:absolute;left:0px;top:163.9px;font-size:6.49px;line-height:7.8px;color:#333;font-weight:normal;white-space:nowrap;transform:scaleX(0.909);transform-origin:left center;">75</div><div style="position:absolute;left:0px;top:145.1px;font-size:6.49px;line-height:7.8px;color:#333;font-weight:normal;white-space:nowrap;transform:scaleX(0.909);transform-origin:left center;">80</div><div style="position:absolute;left:0px;top:126.3px;font-size:6.49px;line-height:7.8px;color:#333;font-weight:normal;white-space:nowrap;transform:scaleX(0.909);transform-origin:left center;">85</div><div style="position:absolute;left:0px;top:107.5px;font-size:6.49px;line-height:7.8px;color:#333;font-weight:normal;white-space:nowrap;transform:scaleX(0.909);transform-origin:left center;">90</div><div style="position:absolute;left:0px;top:88.7px;font-size:6.49px;line-height:7.8px;color:#333;font-weight:normal;white-space:nowrap;transform:scaleX(0.909);transform-origin:left center;">95</div><div style="position:absolute;left:463px;top:279.5px;font-size:6.49px;line-height:7.8px;color:#333;font-weight:normal;white-space:nowrap;transform:scaleX(0.909);transform-origin:left center;">5</div><div style="position:absolute;left:463px;top:263.4px;font-size:6.49px;line-height:7.8px;color:#333;font-weight:normal;white-space:nowrap;transform:scaleX(0.909);transform-origin:left center;">10</div><div style="position:absolute;left:463px;top:247.3px;font-size:6.49px;line-height:7.8px;color:#333;font-weight:normal;white-space:nowrap;transform:scaleX(0.909);transform-origin:left center;">15</div><div style="position:absolute;left:463px;top:231.1px;font-size:6.49px;line-height:7.8px;color:#333;font-weight:normal;white-space:nowrap;transform:scaleX(0.909);transform-origin:left center;">20</div><div style="position:absolute;left:463px;top:215.0px;font-size:6.49px;line-height:7.8px;color:#333;font-weight:normal;white-space:nowrap;transform:scaleX(0.909);transform-origin:left center;">25</div><div style="position:absolute;left:463px;top:198.9px;font-size:6.49px;line-height:7.8px;color:#333;font-weight:normal;white-space:nowrap;transform:scaleX(0.909);transform-origin:left center;">30</div><div style="position:absolute;left:463px;top:182.8px;font-size:6.49px;line-height:7.8px;color:#333;font-weight:normal;white-space:nowrap;transform:scaleX(0.909);transform-origin:left center;">35</div><div style="position:absolute;left:463px;top:166.7px;font-size:6.49px;line-height:7.8px;color:#333;font-weight:normal;white-space:nowrap;transform:scaleX(0.909);transform-origin:left center;">40</div><div style="position:absolute;left:463px;top:150.5px;font-size:6.49px;line-height:7.8px;color:#333;font-weight:normal;white-space:nowrap;transform:scaleX(0.909);transform-origin:left center;">45</div><div style="position:absolute;left:463px;top:134.4px;font-size:6.49px;line-height:7.8px;color:#333;font-weight:normal;white-space:nowrap;transform:scaleX(0.909);transform-origin:left center;">50</div><div style="position:absolute;left:463px;top:118.3px;font-size:6.49px;line-height:7.8px;color:#333;font-weight:normal;white-space:nowrap;transform:scaleX(0.909);transform-origin:left center;">55</div><div style="position:absolute;left:463px;top:102.2px;font-size:6.49px;line-height:7.8px;color:#333;font-weight:normal;white-space:nowrap;transform:scaleX(0.909);transform-origin:left center;">60</div><div style="position:absolute;left:463px;top:86.1px;font-size:6.49px;line-height:7.8px;color:#333;font-weight:normal;white-space:nowrap;transform:scaleX(0.909);transform-origin:left center;">65</div><div style="position:absolute;left:15.5px;top:302.1px;font-size:6.49px;line-height:7.8px;color:#333;font-weight:normal;white-space:nowrap;transform:translateX(-50%)">20</div><div style="position:absolute;left:74.48664748545613px;top:302.1px;font-size:6.49px;line-height:7.8px;color:#333;font-weight:normal;white-space:nowrap;transform:translateX(-50%)">50</div><div style="position:absolute;left:119.10832374272807px;top:302.1px;font-size:6.49px;line-height:7.8px;color:#333;font-weight:normal;white-space:nowrap;transform:translateX(-50%)">100</div><div style="position:absolute;left:163.73px;top:302.1px;font-size:6.49px;line-height:7.8px;color:#333;font-weight:normal;white-space:nowrap;transform:translateX(-50%)">200</div><div style="position:absolute;left:222.71664748545615px;top:302.1px;font-size:6.49px;line-height:7.8px;color:#333;font-weight:normal;white-space:nowrap;transform:translateX(-50%)">500</div><div style="position:absolute;left:267.33832374272805px;top:302.1px;font-size:6.49px;line-height:7.8px;color:#333;font-weight:normal;white-space:nowrap;transform:translateX(-50%)">1000</div><div style="position:absolute;left:311.96px;top:302.1px;font-size:6.49px;line-height:7.8px;color:#333;font-weight:normal;white-space:nowrap;transform:translateX(-50%)">2000</div><div style="position:absolute;left:370.9466474854561px;top:302.1px;font-size:6.49px;line-height:7.8px;color:#333;font-weight:normal;white-space:nowrap;transform:translateX(-50%)">5000</div><div style="position:absolute;left:415.568323742728px;top:302.1px;font-size:6.49px;line-height:7.8px;color:#333;font-weight:normal;white-space:nowrap;transform:translateX(-50%)">10000</div><div style="position:absolute;left:460.18999999999994px;top:302.1px;font-size:6.49px;line-height:7.8px;color:#333;font-weight:normal;white-space:nowrap;transform:translateX(-50%)">20</div><div style="position:absolute;left:455px;top:308.6px;font-size:6.49px;line-height:7.8px;color:#333;font-weight:normal;white-space:nowrap;transform:scaleX(0.909);transform-origin:left center;">f [</div><div style="position:absolute;left:2.5px;top:312.2px;font-size:6.49px;line-height:7.8px;color:#222;font-weight:normal;white-space:nowrap;transform:scaleX(0.909);transform-origin:left center;">Amplitude gesamt</div><div style="position:absolute;left:2.5px;top:320.0px;font-size:6.49px;line-height:7.8px;color:#222;font-weight:normal;white-space:nowrap;transform:scaleX(0.909);transform-origin:left center;">FRS 8 M - 8 Ohm (2)</div><div style="position:absolute;left:2.5px;top:327.1px;font-size:6.49px;line-height:7.8px;color:#222;font-weight:normal;white-space:nowrap;transform:scaleX(0.909);transform-origin:left center;">Energiefrequenzgang</div><div style="position:absolute;left:240px;top:315px;width:10px;height:0.8px;background:#5a5a5a;"></div><div style="position:absolute;left:240px;top:323px;width:10px;height:0.8px;background:#7a6a6a;"></div><div style="position:absolute;left:253px;top:312.1px;font-size:6.49px;line-height:7.8px;color:#222;font-weight:normal;white-space:nowrap;transform:scaleX(0.909);transform-origin:left center;">WF 130 ND - 8 Ohm (1)</div><div style="position:absolute;left:253px;top:319.6px;font-size:6.49px;line-height:7.8px;color:#222;font-weight:normal;white-space:nowrap;transform:scaleX(0.909);transform-origin:left center;">Impedanz Verstärker 1</div><div style="position:absolute;left:0px;top:336.5px;width:492px;height:10.5px;background:#f0f0f0;"></div><div style="position:absolute;left:0px;top:336.5px;width:492px;height:1px;background:#e0e0e0;"></div><div style="position:absolute;left:0px;top:339.5px;font-size:5.68px;line-height:6.8px;color:#222;font-weight:normal;white-space:nowrap;transform:scaleX(0.862);transform-origin:left center;">nung war erfolgreich.</div><div style="position:absolute;left:0px;top:346.5px;width:492px;height:1px;background:#2a78b0;"></div><div style="position:absolute;left:493.2px;top:0px;width:276.8px;height:210px;background:#1470cc;"></div><div style="position:absolute;left:498px;top:2px;width:272px;height:208px;background:#ffffff;"></div><svg style="position:absolute;left:499px;top:3px" width="8" height="9"><rect x="0" y="0" width="4" height="5" fill="#8a2030"/><rect x="2" y="3" width="5" height="5" rx="1" fill="#c0306a"/></svg><div style="position:absolute;left:509px;top:4.2px;font-size:5.94px;line-height:7.1px;color:#b57aa8;font-weight:normal;white-space:nowrap;transform:scaleX(0.909);transform-origin:left center;">Weicheneditor - Verstärker 1</div><div style="position:absolute;left:501px;top:14.9px;font-size:5.94px;line-height:7.1px;color:#6e6e6e;font-weight:normal;white-space:nowrap;transform:scaleX(0.909);transform-origin:left center;">Freie Verbindungen</div><div style="position:absolute;left:554px;top:14.9px;font-size:5.94px;line-height:7.1px;color:#6e6e6e;font-weight:normal;white-space:nowrap;transform:scaleX(0.909);transform-origin:left center;">Mausbelegung</div><div style="position:absolute;left:597px;top:14.9px;font-size:5.94px;line-height:7.1px;color:#6e6e6e;font-weight:normal;white-space:nowrap;transform:scaleX(0.909);transform-origin:left center;">Bauteiloptimierung</div><div style="position:absolute;left:498px;top:23.5px;width:272px;height:58px;background:#f0f0f0;"></div><div style="position:absolute;left:500px;top:25px;width:125px;height:31px;background:#f3f3f3;border:1px solid #e8e8e8;box-sizing:border-box;"></div><div style="position:absolute;left:503px;top:25.0px;font-size:5.68px;line-height:6.8px;color:#222;font-weight:normal;white-space:nowrap;transform:scaleX(0.862);transform-origin:left center;">Ansicht</div><div style="position:absolute;left:506px;top:33px;width:6.8px;height:6.5px;background:#fff;border:0.7px solid #6a6a6a;box-sizing:border-box;"></div><div style="position:absolute;left:513px;top:33.0px;font-size:5.68px;line-height:6.8px;color:#222;font-weight:normal;white-space:nowrap;transform:scaleX(0.862);transform-origin:left center;">Bezeichnung anzeigen statt R-Wert bei Spulen</div><div style="position:absolute;left:506px;top:42px;width:6.8px;height:6.5px;background:#fff;border:0.7px solid #6a6a6a;box-sizing:border-box;"></div><div style="position:absolute;left:513px;top:42.0px;font-size:5.68px;line-height:6.8px;color:#222;font-weight:normal;white-space:nowrap;transform:scaleX(0.862);transform-origin:left center;">Druckansicht statt Editoransicht</div><div style="position:absolute;left:628.5px;top:25px;width:45px;height:31px;background:#f5f5f5;border:1px solid #e8e8e8;box-sizing:border-box;"></div><div style="position:absolute;left:631px;top:25.0px;font-size:5.68px;line-height:6.8px;color:#222;font-weight:normal;white-space:nowrap;transform:scaleX(0.862);transform-origin:left center;">Fenstergröße</div><svg style="position:absolute;left:630px;top:31.5px" width="7" height="7"><circle cx="3.5" cy="3.5" r="3" fill="#fff" stroke="#444" stroke-width="0.8"/><circle cx="3.5" cy="3.5" r="1.4" fill="#111"/></svg><div style="position:absolute;left:638px;top:32.0px;font-size:5.68px;line-height:6.8px;color:#222;font-weight:normal;white-space:nowrap;transform:scaleX(0.862);transform-origin:left center;">Ansicht klein</div><svg style="position:absolute;left:630px;top:38.5px" width="7" height="7"><circle cx="3.5" cy="3.5" r="3" fill="#fff" stroke="#444" stroke-width="0.8"/></svg><div style="position:absolute;left:638px;top:39.0px;font-size:5.68px;line-height:6.8px;color:#222;font-weight:normal;white-space:nowrap;transform:scaleX(0.862);transform-origin:left center;">Ansicht mittel</div><svg style="position:absolute;left:630px;top:46.1px" width="7" height="7"><circle cx="3.5" cy="3.5" r="3" fill="#fff" stroke="#444" stroke-width="0.8"/></svg><div style="position:absolute;left:638px;top:46.6px;font-size:5.68px;line-height:6.8px;color:#222;font-weight:normal;white-space:nowrap;transform:scaleX(0.862);transform-origin:left center;">Ansicht groß</div><div style="position:absolute;left:674px;top:25px;width:56px;height:55px;background:#f2f2f2;border:1px solid #e6e6e6;box-sizing:border-box;"></div><div style="position:absolute;left:678px;top:25.0px;font-size:5.68px;line-height:6.8px;color:#222;font-weight:normal;white-space:nowrap;transform:scaleX(0.862);transform-origin:left center;width:56px;overflow:hidden;">Freie Drahtverbindunge</div><div style="position:absolute;left:678px;top:30.5px;width:51px;height:25px;background:#e1e1e1;border:1px solid #c8c8c8;box-sizing:border-box;"></div><div style="position:absolute;left:680px;top:37.0px;font-size:5.68px;line-height:6.8px;color:#222;font-weight:normal;white-space:nowrap;transform:scaleX(0.862);transform-origin:center center;width:48px;text-align:center;">Freie Verbindungen</div><div style="position:absolute;left:680px;top:43.5px;font-size:5.68px;line-height:6.8px;color:#222;font-weight:normal;white-space:nowrap;transform:scaleX(0.862);transform-origin:center center;width:48px;text-align:center;">verwalten</div><div style="position:absolute;left:737px;top:24.2px;font-size:5.68px;line-height:6.8px;color:#222;font-weight:normal;white-space:nowrap;transform:scaleX(0.862);transform-origin:left center;">Mausaktionen</div><div style="position:absolute;left:734.5px;top:32px;width:36px;height:41px;background:#ffffe6;"></div><div style="position:absolute;left:736px;top:32.3px;font-size:5.68px;line-height:6.8px;color:#8c8c30;font-weight:normal;white-space:nowrap;transform:scaleX(0.862);transform-origin:left center;">Linksklick: Drahtverbindung</div><div style="position:absolute;left:736px;top:38.2px;font-size:5.68px;line-height:6.8px;color:#8c8c30;font-weight:normal;white-space:nowrap;transform:scaleX(0.862);transform-origin:left center;">&lt;Shift&gt; Linksklick: Draht</div><div style="position:absolute;left:736px;top:44.0px;font-size:5.68px;line-height:6.8px;color:#8c8c30;font-weight:normal;white-space:nowrap;transform:scaleX(0.862);transform-origin:left center;">&lt;Strg&gt; Linksklick: Bauteil</div><div style="position:absolute;left:736px;top:49.9px;font-size:5.68px;line-height:6.8px;color:#8c8c30;font-weight:normal;white-space:nowrap;transform:scaleX(0.862);transform-origin:left center;">Rechtsklick: Bauteil</div><div style="position:absolute;left:736px;top:55.7px;font-size:5.68px;line-height:6.8px;color:#8c8c30;font-weight:normal;white-space:nowrap;transform:scaleX(0.862);transform-origin:left center;">&lt;Shift&gt; Rechtsklick</div><div style="position:absolute;left:736px;top:61.6px;font-size:5.68px;line-height:6.8px;color:#8c8c30;font-weight:normal;white-space:nowrap;transform:scaleX(0.862);transform-origin:left center;">&lt;Strg&gt; Rechtsklick</div><div style="position:absolute;left:502px;top:63px;width:34px;height:10px;background:#e5f1fb;border:1px solid #3c7fb1;box-sizing:border-box;"></div><div style="position:absolute;left:502px;top:65.0px;font-size:5.68px;line-height:6.8px;color:#222;font-weight:normal;white-space:nowrap;transform:scaleX(0.862);transform-origin:center center;width:34px;text-align:center;">Ok</div><div style="position:absolute;left:542.5px;top:63px;width:33px;height:10px;background:#e1e1e1;border:1px solid #adadad;box-sizing:border-box;"></div><div style="position:absolute;left:542.5px;top:65.0px;font-size:5.68px;line-height:6.8px;color:#222;font-weight:normal;white-space:nowrap;transform:scaleX(0.862);transform-origin:center center;width:33px;text-align:center;">Übernehmen</div><div style="position:absolute;left:582px;top:63px;width:34px;height:10px;background:#e1e1e1;border:1px solid #adadad;box-sizing:border-box;"></div><div style="position:absolute;left:582px;top:65.0px;font-size:5.68px;line-height:6.8px;color:#222;font-weight:normal;white-space:nowrap;transform:scaleX(0.862);transform-origin:center center;width:34px;text-align:center;">Abbruch</div><svg width="272" height="128" style="position:absolute;left:498px;top:82px">
<rect x="-22.0" y="12.8" width="28" height="9" fill="none" stroke="#eeeeee" stroke-width="0.8"/>
<rect x="13.6" y="12.8" width="28" height="9" fill="none" stroke="#eeeeee" stroke-width="0.8"/>
<rect x="49.2" y="12.8" width="28" height="9" fill="none" stroke="#eeeeee" stroke-width="0.8"/>
<rect x="84.8" y="12.8" width="28" height="9" fill="none" stroke="#eeeeee" stroke-width="0.8"/>
<rect x="120.4" y="12.8" width="28" height="9" fill="none" stroke="#eeeeee" stroke-width="0.8"/>
<rect x="156.0" y="12.8" width="28" height="9" fill="none" stroke="#eeeeee" stroke-width="0.8"/>
<rect x="191.6" y="12.8" width="28" height="9" fill="none" stroke="#eeeeee" stroke-width="0.8"/>
<rect x="227.2" y="12.8" width="28" height="9" fill="none" stroke="#eeeeee" stroke-width="0.8"/>
<rect x="262.8" y="12.8" width="28" height="9" fill="none" stroke="#eeeeee" stroke-width="0.8"/>
<rect x="298.4" y="12.8" width="28" height="9" fill="none" stroke="#eeeeee" stroke-width="0.8"/>
<rect x="-4.0" y="24.1" width="28" height="9" fill="none" stroke="#eeeeee" stroke-width="0.8"/>
<rect x="31.6" y="24.1" width="28" height="9" fill="none" stroke="#eeeeee" stroke-width="0.8"/>
<rect x="67.2" y="24.1" width="28" height="9" fill="none" stroke="#eeeeee" stroke-width="0.8"/>
<rect x="102.8" y="24.1" width="28" height="9" fill="none" stroke="#eeeeee" stroke-width="0.8"/>
<rect x="138.4" y="24.1" width="28" height="9" fill="none" stroke="#eeeeee" stroke-width="0.8"/>
<rect x="174.0" y="24.1" width="28" height="9" fill="none" stroke="#eeeeee" stroke-width="0.8"/>
<rect x="209.6" y="24.1" width="28" height="9" fill="none" stroke="#eeeeee" stroke-width="0.8"/>
<rect x="245.2" y="24.1" width="28" height="9" fill="none" stroke="#eeeeee" stroke-width="0.8"/>
<rect x="280.8" y="24.1" width="28" height="9" fill="none" stroke="#eeeeee" stroke-width="0.8"/>
<rect x="316.4" y="24.1" width="28" height="9" fill="none" stroke="#eeeeee" stroke-width="0.8"/>
<rect x="-22.0" y="35.4" width="28" height="9" fill="none" stroke="#eeeeee" stroke-width="0.8"/>
<rect x="13.6" y="35.4" width="28" height="9" fill="none" stroke="#eeeeee" stroke-width="0.8"/>
<rect x="49.2" y="35.4" width="28" height="9" fill="none" stroke="#eeeeee" stroke-width="0.8"/>
<rect x="84.8" y="35.4" width="28" height="9" fill="none" stroke="#eeeeee" stroke-width="0.8"/>
<rect x="120.4" y="35.4" width="28" height="9" fill="none" stroke="#eeeeee" stroke-width="0.8"/>
<rect x="156.0" y="35.4" width="28" height="9" fill="none" stroke="#eeeeee" stroke-width="0.8"/>
<rect x="191.6" y="35.4" width="28" height="9" fill="none" stroke="#eeeeee" stroke-width="0.8"/>
<rect x="227.2" y="35.4" width="28" height="9" fill="none" stroke="#eeeeee" stroke-width="0.8"/>
<rect x="262.8" y="35.4" width="28" height="9" fill="none" stroke="#eeeeee" stroke-width="0.8"/>
<rect x="298.4" y="35.4" width="28" height="9" fill="none" stroke="#eeeeee" stroke-width="0.8"/>
<rect x="-4.0" y="46.7" width="28" height="9" fill="none" stroke="#eeeeee" stroke-width="0.8"/>
<rect x="31.6" y="46.7" width="28" height="9" fill="none" stroke="#eeeeee" stroke-width="0.8"/>
<rect x="67.2" y="46.7" width="28" height="9" fill="none" stroke="#eeeeee" stroke-width="0.8"/>
<rect x="102.8" y="46.7" width="28" height="9" fill="none" stroke="#eeeeee" stroke-width="0.8"/>
<rect x="138.4" y="46.7" width="28" height="9" fill="none" stroke="#eeeeee" stroke-width="0.8"/>
<rect x="174.0" y="46.7" width="28" height="9" fill="none" stroke="#eeeeee" stroke-width="0.8"/>
<rect x="209.6" y="46.7" width="28" height="9" fill="none" stroke="#eeeeee" stroke-width="0.8"/>
<rect x="245.2" y="46.7" width="28" height="9" fill="none" stroke="#eeeeee" stroke-width="0.8"/>
<rect x="280.8" y="46.7" width="28" height="9" fill="none" stroke="#eeeeee" stroke-width="0.8"/>
<rect x="316.4" y="46.7" width="28" height="9" fill="none" stroke="#eeeeee" stroke-width="0.8"/>
<rect x="-22.0" y="58.0" width="28" height="9" fill="none" stroke="#eeeeee" stroke-width="0.8"/>
<rect x="13.6" y="58.0" width="28" height="9" fill="none" stroke="#eeeeee" stroke-width="0.8"/>
<rect x="49.2" y="58.0" width="28" height="9" fill="none" stroke="#eeeeee" stroke-width="0.8"/>
<rect x="84.8" y="58.0" width="28" height="9" fill="none" stroke="#eeeeee" stroke-width="0.8"/>
<rect x="120.4" y="58.0" width="28" height="9" fill="none" stroke="#eeeeee" stroke-width="0.8"/>
<rect x="156.0" y="58.0" width="28" height="9" fill="none" stroke="#eeeeee" stroke-width="0.8"/>
<rect x="191.6" y="58.0" width="28" height="9" fill="none" stroke="#eeeeee" stroke-width="0.8"/>
<rect x="227.2" y="58.0" width="28" height="9" fill="none" stroke="#eeeeee" stroke-width="0.8"/>
<rect x="262.8" y="58.0" width="28" height="9" fill="none" stroke="#eeeeee" stroke-width="0.8"/>
<rect x="298.4" y="58.0" width="28" height="9" fill="none" stroke="#eeeeee" stroke-width="0.8"/>
<rect x="-4.0" y="69.3" width="28" height="9" fill="none" stroke="#eeeeee" stroke-width="0.8"/>
<rect x="31.6" y="69.3" width="28" height="9" fill="none" stroke="#eeeeee" stroke-width="0.8"/>
<rect x="67.2" y="69.3" width="28" height="9" fill="none" stroke="#eeeeee" stroke-width="0.8"/>
<rect x="102.8" y="69.3" width="28" height="9" fill="none" stroke="#eeeeee" stroke-width="0.8"/>
<rect x="138.4" y="69.3" width="28" height="9" fill="none" stroke="#eeeeee" stroke-width="0.8"/>
<rect x="174.0" y="69.3" width="28" height="9" fill="none" stroke="#eeeeee" stroke-width="0.8"/>
<rect x="209.6" y="69.3" width="28" height="9" fill="none" stroke="#eeeeee" stroke-width="0.8"/>
<rect x="245.2" y="69.3" width="28" height="9" fill="none" stroke="#eeeeee" stroke-width="0.8"/>
<rect x="280.8" y="69.3" width="28" height="9" fill="none" stroke="#eeeeee" stroke-width="0.8"/>
<rect x="316.4" y="69.3" width="28" height="9" fill="none" stroke="#eeeeee" stroke-width="0.8"/>
<rect x="-22.0" y="80.6" width="28" height="9" fill="none" stroke="#eeeeee" stroke-width="0.8"/>
<rect x="13.6" y="80.6" width="28" height="9" fill="none" stroke="#eeeeee" stroke-width="0.8"/>
<rect x="49.2" y="80.6" width="28" height="9" fill="none" stroke="#eeeeee" stroke-width="0.8"/>
<rect x="84.8" y="80.6" width="28" height="9" fill="none" stroke="#eeeeee" stroke-width="0.8"/>
<rect x="120.4" y="80.6" width="28" height="9" fill="none" stroke="#eeeeee" stroke-width="0.8"/>
<rect x="156.0" y="80.6" width="28" height="9" fill="none" stroke="#eeeeee" stroke-width="0.8"/>
<rect x="191.6" y="80.6" width="28" height="9" fill="none" stroke="#eeeeee" stroke-width="0.8"/>
<rect x="227.2" y="80.6" width="28" height="9" fill="none" stroke="#eeeeee" stroke-width="0.8"/>
<rect x="262.8" y="80.6" width="28" height="9" fill="none" stroke="#eeeeee" stroke-width="0.8"/>
<rect x="298.4" y="80.6" width="28" height="9" fill="none" stroke="#eeeeee" stroke-width="0.8"/>
<rect x="-4.0" y="91.9" width="28" height="9" fill="none" stroke="#eeeeee" stroke-width="0.8"/>
<rect x="31.6" y="91.9" width="28" height="9" fill="none" stroke="#eeeeee" stroke-width="0.8"/>
<rect x="67.2" y="91.9" width="28" height="9" fill="none" stroke="#eeeeee" stroke-width="0.8"/>
<rect x="102.8" y="91.9" width="28" height="9" fill="none" stroke="#eeeeee" stroke-width="0.8"/>
<rect x="138.4" y="91.9" width="28" height="9" fill="none" stroke="#eeeeee" stroke-width="0.8"/>
<rect x="174.0" y="91.9" width="28" height="9" fill="none" stroke="#eeeeee" stroke-width="0.8"/>
<rect x="209.6" y="91.9" width="28" height="9" fill="none" stroke="#eeeeee" stroke-width="0.8"/>
<rect x="245.2" y="91.9" width="28" height="9" fill="none" stroke="#eeeeee" stroke-width="0.8"/>
<rect x="280.8" y="91.9" width="28" height="9" fill="none" stroke="#eeeeee" stroke-width="0.8"/>
<rect x="316.4" y="91.9" width="28" height="9" fill="none" stroke="#eeeeee" stroke-width="0.8"/>
<rect x="-22.0" y="103.2" width="28" height="9" fill="none" stroke="#eeeeee" stroke-width="0.8"/>
<rect x="13.6" y="103.2" width="28" height="9" fill="none" stroke="#eeeeee" stroke-width="0.8"/>
<rect x="49.2" y="103.2" width="28" height="9" fill="none" stroke="#eeeeee" stroke-width="0.8"/>
<rect x="84.8" y="103.2" width="28" height="9" fill="none" stroke="#eeeeee" stroke-width="0.8"/>
<rect x="120.4" y="103.2" width="28" height="9" fill="none" stroke="#eeeeee" stroke-width="0.8"/>
<rect x="156.0" y="103.2" width="28" height="9" fill="none" stroke="#eeeeee" stroke-width="0.8"/>
<rect x="191.6" y="103.2" width="28" height="9" fill="none" stroke="#eeeeee" stroke-width="0.8"/>
<rect x="227.2" y="103.2" width="28" height="9" fill="none" stroke="#eeeeee" stroke-width="0.8"/>
<rect x="262.8" y="103.2" width="28" height="9" fill="none" stroke="#eeeeee" stroke-width="0.8"/>
<rect x="298.4" y="103.2" width="28" height="9" fill="none" stroke="#eeeeee" stroke-width="0.8"/>
<rect x="-4.0" y="114.5" width="28" height="9" fill="none" stroke="#eeeeee" stroke-width="0.8"/>
<rect x="31.6" y="114.5" width="28" height="9" fill="none" stroke="#eeeeee" stroke-width="0.8"/>
<rect x="67.2" y="114.5" width="28" height="9" fill="none" stroke="#eeeeee" stroke-width="0.8"/>
<rect x="102.8" y="114.5" width="28" height="9" fill="none" stroke="#eeeeee" stroke-width="0.8"/>
<rect x="138.4" y="114.5" width="28" height="9" fill="none" stroke="#eeeeee" stroke-width="0.8"/>
<rect x="174.0" y="114.5" width="28" height="9" fill="none" stroke="#eeeeee" stroke-width="0.8"/>
<rect x="209.6" y="114.5" width="28" height="9" fill="none" stroke="#eeeeee" stroke-width="0.8"/>
<rect x="245.2" y="114.5" width="28" height="9" fill="none" stroke="#eeeeee" stroke-width="0.8"/>
<rect x="280.8" y="114.5" width="28" height="9" fill="none" stroke="#eeeeee" stroke-width="0.8"/>
<rect x="316.4" y="114.5" width="28" height="9" fill="none" stroke="#eeeeee" stroke-width="0.8"/>
<rect x="-22.0" y="125.8" width="28" height="9" fill="none" stroke="#eeeeee" stroke-width="0.8"/>
<rect x="13.6" y="125.8" width="28" height="9" fill="none" stroke="#eeeeee" stroke-width="0.8"/>
<rect x="49.2" y="125.8" width="28" height="9" fill="none" stroke="#eeeeee" stroke-width="0.8"/>
<rect x="84.8" y="125.8" width="28" height="9" fill="none" stroke="#eeeeee" stroke-width="0.8"/>
<rect x="120.4" y="125.8" width="28" height="9" fill="none" stroke="#eeeeee" stroke-width="0.8"/>
<rect x="156.0" y="125.8" width="28" height="9" fill="none" stroke="#eeeeee" stroke-width="0.8"/>
<rect x="191.6" y="125.8" width="28" height="9" fill="none" stroke="#eeeeee" stroke-width="0.8"/>
<rect x="227.2" y="125.8" width="28" height="9" fill="none" stroke="#eeeeee" stroke-width="0.8"/>
<rect x="262.8" y="125.8" width="28" height="9" fill="none" stroke="#eeeeee" stroke-width="0.8"/>
<rect x="298.4" y="125.8" width="28" height="9" fill="none" stroke="#eeeeee" stroke-width="0.8"/>
<rect x="-4.0" y="137.1" width="28" height="9" fill="none" stroke="#eeeeee" stroke-width="0.8"/>
<rect x="31.6" y="137.1" width="28" height="9" fill="none" stroke="#eeeeee" stroke-width="0.8"/>
<rect x="67.2" y="137.1" width="28" height="9" fill="none" stroke="#eeeeee" stroke-width="0.8"/>
<rect x="102.8" y="137.1" width="28" height="9" fill="none" stroke="#eeeeee" stroke-width="0.8"/>
<rect x="138.4" y="137.1" width="28" height="9" fill="none" stroke="#eeeeee" stroke-width="0.8"/>
<rect x="174.0" y="137.1" width="28" height="9" fill="none" stroke="#eeeeee" stroke-width="0.8"/>
<rect x="209.6" y="137.1" width="28" height="9" fill="none" stroke="#eeeeee" stroke-width="0.8"/>
<rect x="245.2" y="137.1" width="28" height="9" fill="none" stroke="#eeeeee" stroke-width="0.8"/>
<rect x="280.8" y="137.1" width="28" height="9" fill="none" stroke="#eeeeee" stroke-width="0.8"/>
<rect x="316.4" y="137.1" width="28" height="9" fill="none" stroke="#eeeeee" stroke-width="0.8"/>
<circle cx="7.6" cy="7.2" r="1.3" fill="#111"/>
<circle cx="7.6" cy="29.8" r="1.3" fill="#111"/>
<circle cx="7.6" cy="52.4" r="1.3" fill="#111"/>
<circle cx="7.6" cy="75.0" r="1.3" fill="#111"/>
<circle cx="7.6" cy="97.6" r="1.3" fill="#111"/>
<circle cx="7.6" cy="120.2" r="1.3" fill="#111"/>
<circle cx="43.2" cy="7.2" r="1.3" fill="#111"/>
<circle cx="43.2" cy="29.8" r="1.3" fill="#111"/>
<circle cx="43.2" cy="52.4" r="1.3" fill="#111"/>
<circle cx="43.2" cy="75.0" r="1.3" fill="#111"/>
<circle cx="43.2" cy="97.6" r="1.3" fill="#111"/>
<circle cx="43.2" cy="120.2" r="1.3" fill="#111"/>
<circle cx="78.8" cy="7.2" r="1.3" fill="#111"/>
<circle cx="78.8" cy="29.8" r="1.3" fill="#111"/>
<circle cx="78.8" cy="52.4" r="1.3" fill="#111"/>
<circle cx="78.8" cy="75.0" r="1.3" fill="#111"/>
<circle cx="78.8" cy="97.6" r="1.3" fill="#111"/>
<circle cx="78.8" cy="120.2" r="1.3" fill="#111"/>
<circle cx="114.4" cy="7.2" r="1.3" fill="#111"/>
<circle cx="114.4" cy="29.8" r="1.3" fill="#111"/>
<circle cx="114.4" cy="52.4" r="1.3" fill="#111"/>
<circle cx="114.4" cy="75.0" r="1.3" fill="#111"/>
<circle cx="114.4" cy="97.6" r="1.3" fill="#111"/>
<circle cx="114.4" cy="120.2" r="1.3" fill="#111"/>
<circle cx="150.0" cy="7.2" r="1.3" fill="#111"/>
<circle cx="150.0" cy="29.8" r="1.3" fill="#111"/>
<circle cx="150.0" cy="52.4" r="1.3" fill="#111"/>
<circle cx="150.0" cy="75.0" r="1.3" fill="#111"/>
<circle cx="150.0" cy="97.6" r="1.3" fill="#111"/>
<circle cx="150.0" cy="120.2" r="1.3" fill="#111"/>
<circle cx="185.6" cy="7.2" r="1.3" fill="#111"/>
<circle cx="185.6" cy="29.8" r="1.3" fill="#111"/>
<circle cx="185.6" cy="52.4" r="1.3" fill="#111"/>
<circle cx="185.6" cy="75.0" r="1.3" fill="#111"/>
<circle cx="185.6" cy="97.6" r="1.3" fill="#111"/>
<circle cx="185.6" cy="120.2" r="1.3" fill="#111"/>
<circle cx="221.2" cy="7.2" r="1.3" fill="#111"/>
<circle cx="221.2" cy="29.8" r="1.3" fill="#111"/>
<circle cx="221.2" cy="52.4" r="1.3" fill="#111"/>
<circle cx="221.2" cy="75.0" r="1.3" fill="#111"/>
<circle cx="221.2" cy="97.6" r="1.3" fill="#111"/>
<circle cx="221.2" cy="120.2" r="1.3" fill="#111"/>
<circle cx="256.8" cy="7.2" r="1.3" fill="#111"/>
<circle cx="256.8" cy="29.8" r="1.3" fill="#111"/>
<circle cx="256.8" cy="52.4" r="1.3" fill="#111"/>
<circle cx="256.8" cy="75.0" r="1.3" fill="#111"/>
<circle cx="256.8" cy="97.6" r="1.3" fill="#111"/>
<circle cx="256.8" cy="120.2" r="1.3" fill="#111"/>
<line x1="7.6" y1="7.2" x2="185.7" y2="7.2" stroke="#222" stroke-width="0.9"/>
<line x1="7.6" y1="7.2" x2="7.6" y2="120.0" stroke="#222" stroke-width="0.9"/>
<line x1="7.6" y1="120.5" x2="272.0" y2="120.5" stroke="#222" stroke-width="0.9"/>
<line x1="78.6" y1="7.2" x2="78.6" y2="120.0" stroke="#222" stroke-width="0.9"/>
<line x1="185.7" y1="7.2" x2="185.7" y2="120.0" stroke="#222" stroke-width="0.9"/>
<line x1="7.6" y1="75.2" x2="78.6" y2="75.2" stroke="#222" stroke-width="0.9"/>
<line x1="150.4" y1="98.0" x2="185.7" y2="98.0" stroke="#222" stroke-width="0.9"/>
<line x1="150.4" y1="98.0" x2="150.4" y2="120.5" stroke="#222" stroke-width="0.9"/>
<rect x="76.39999999999998" y="35.2" width="4.6" height="7.8" rx="0.8" fill="#111"/>
<rect x="148.20000000000005" y="103.19999999999999" width="4.4" height="8" rx="0.8" fill="#111"/>
<rect x="46.39999999999998" y="73.30000000000001" width="8.3" height="3.8" fill="#fff" stroke="#333" stroke-width="0.7"/>
<rect x="183.60000000000002" y="57.400000000000006" width="4.2" height="8.3" fill="#fff" stroke="#333" stroke-width="0.7"/>
<rect x="14.600000000000023" y="71.5" width="2.4" height="6.7" fill="#fff" stroke="#333" stroke-width="0.7"/>
<rect x="181.5" y="84.4" width="8.4" height="3.1" fill="#fff" stroke="#333" stroke-width="0.7"/>
<rect x="75.60000000000002" y="102.5" width="6.3" height="8.9" fill="#fff" stroke="#333" stroke-width="0.7"/>
<rect x="77.60000000000002" y="104.5" width="2.6" height="4.9" fill="#fff" stroke="#333" stroke-width="0.6"/>
<rect x="182.70000000000005" y="102.5" width="6.3" height="8.9" fill="#fff" stroke="#333" stroke-width="0.7"/>
<rect x="184.70000000000005" y="104.5" width="2.6" height="4.9" fill="#fff" stroke="#333" stroke-width="0.6"/>
<circle cx="7.399999999999977" cy="58.69999999999999" r="1.2" fill="#fff" stroke="#333" stroke-width="0.6"/>
<circle cx="7.399999999999977" cy="65.4" r="1.2" fill="#fff" stroke="#333" stroke-width="0.6"/>
</svg><div style="position:absolute;left:582px;top:117.0px;font-size:5.02px;line-height:6.0px;color:#333;font-weight:normal;white-space:nowrap;transform:scaleX(0.877);transform-origin:left center;">2,20 mH</div><div style="position:absolute;left:582px;top:122.0px;font-size:5.02px;line-height:6.0px;color:#333;font-weight:normal;white-space:nowrap;transform:scaleX(0.877);transform-origin:left center;">0,35 Ohm</div><div style="position:absolute;left:511px;top:140.0px;font-size:5.02px;line-height:6.0px;color:#333;font-weight:normal;white-space:nowrap;transform:scaleX(0.877);transform-origin:left center;">Amp</div><div style="position:absolute;left:518.8px;top:150.9px;font-size:5.02px;line-height:6.0px;color:#333;font-weight:normal;white-space:nowrap;transform:scaleX(0.877);transform-origin:left center;">15,0 µF</div><div style="position:absolute;left:553.5px;top:150.9px;font-size:5.02px;line-height:6.0px;color:#333;font-weight:normal;white-space:nowrap;transform:scaleX(0.877);transform-origin:left center;">2,20 Ohm</div><div style="position:absolute;left:582.5px;top:184.6px;font-size:5.02px;line-height:6.0px;color:#333;font-weight:normal;white-space:nowrap;transform:scaleX(0.877);transform-origin:left center;">WF 130 NC</div><div style="position:absolute;left:582.5px;top:189.8px;font-size:5.02px;line-height:6.0px;color:#333;font-weight:normal;white-space:nowrap;transform:scaleX(0.877);transform-origin:left center;">Chassis 1</div><div style="position:absolute;left:689px;top:139.9px;font-size:5.02px;line-height:6.0px;color:#333;font-weight:normal;white-space:nowrap;transform:scaleX(0.877);transform-origin:left center;">4,70 Ohm</div><div style="position:absolute;left:689px;top:162.4px;font-size:5.02px;line-height:6.0px;color:#333;font-weight:normal;white-space:nowrap;transform:scaleX(0.877);transform-origin:left center;">15,0 µF</div><div style="position:absolute;left:653.5px;top:184.6px;font-size:5.02px;line-height:6.0px;color:#333;font-weight:normal;white-space:nowrap;transform:scaleX(0.877);transform-origin:left center;">1,50 mH</div><div style="position:absolute;left:653.5px;top:189.8px;font-size:5.02px;line-height:6.0px;color:#333;font-weight:normal;white-space:nowrap;transform:scaleX(0.877);transform-origin:left center;">0,50 Ohm</div><div style="position:absolute;left:689px;top:184.6px;font-size:5.02px;line-height:6.0px;color:#333;font-weight:normal;white-space:nowrap;transform:scaleX(0.877);transform-origin:left center;">FRS 8 M -</div><div style="position:absolute;left:689px;top:189.8px;font-size:5.02px;line-height:6.0px;color:#333;font-weight:normal;white-space:nowrap;transform:scaleX(0.877);transform-origin:left center;">Chassis 2</div><div style="position:absolute;left:501.5px;top:137.9px;font-size:5.02px;line-height:6.0px;color:#333;font-weight:normal;white-space:nowrap;transform:scaleX(0.877);transform-origin:left center;">+</div><div style="position:absolute;left:501.8px;top:144.8px;font-size:5.02px;line-height:6.0px;color:#333;font-weight:normal;white-space:nowrap;transform:scaleX(0.877);transform-origin:left center;">-</div><div style="position:absolute;left:459.5px;top:207.5px;width:311px;height:258px;background:#f0f0f0;border:1px solid #c8c8c8;box-sizing:border-box;"></div><div style="position:absolute;left:460.5px;top:208.5px;width:310px;height:11px;background:#ffffff;"></div><div style="position:absolute;left:462.5px;top:219.5px;width:1px;height:246px;background:#dcdcdc;"></div><div style="position:absolute;left:463.5px;top:219.5px;width:307px;height:20px;background:#f6f6f6;"></div><div style="position:absolute;left:460.6px;top:210.2px;font-size:6.05px;line-height:7.3px;color:#555;font-weight:normal;white-space:nowrap;transform:scaleX(0.909);transform-origin:left center;">Boxsim - Option gemeinsames Außengehäuse</div><div style="position:absolute;left:466px;top:221.5px;font-size:5.68px;line-height:6.8px;color:#222;font-weight:normal;white-space:nowrap;transform:scaleX(0.862);transform-origin:left center;">Für alle Chassis, die in einem gemeinsamen Außengehäuse sitzen, können Schallwandgeometrien und Positionen hier einfacher festgelegt werden.</div><div style="position:absolute;left:466px;top:229.3px;font-size:5.68px;line-height:6.8px;color:#222;font-weight:normal;white-space:nowrap;transform:scaleX(0.862);transform-origin:left center;">Die Angaben auf dieser Seite dienen der Simulation der&nbsp; Beugung des Schalls an den Gehäusekanten und sind daher Außenmaße.</div><div style="position:absolute;left:557.5px;top:243px;width:6.8px;height:6.5px;background:#fff;border:0.7px solid #6a6a6a;box-sizing:border-box;"></div><svg style="position:absolute;left:557.5px;top:243px" width="7" height="7"><polyline points="1.4,3.3 2.9,4.8 5.5,1.6" fill="none" stroke="#333" stroke-width="0.8"/></svg><div style="position:absolute;left:565px;top:243.0px;font-size:5.68px;line-height:6.8px;color:#222;font-weight:normal;white-space:nowrap;transform:scaleX(0.862);transform-origin:left center;">Vorschau zeigen</div><div style="position:absolute;left:465px;top:253.8px;width:142px;height:131px;background:#ffffff;"></div><div style="position:absolute;left:467.4px;top:255.2px;width:102.5px;height:126.3px;background:#fffefd;border:2px solid #c4aca4;box-sizing:border-box;"></div><div style="position:absolute;left:516.6px;top:305.3px;width:3px;height:3px;background:#606060;border-radius:50%;"></div><div style="position:absolute;left:515.3px;top:327.3px;width:5.5px;height:5.5px;background:#8a8a8a;border-radius:50%;box-shadow:0 0 1px #aaa;"></div><div style="position:absolute;left:516.4px;top:335.2px;width:3.2px;height:3.2px;background:#606060;border-radius:50%;"></div><div style="position:absolute;left:466px;top:385.3px;font-size:5.68px;line-height:6.8px;color:#222;font-weight:normal;white-space:nowrap;transform:scaleX(0.862);transform-origin:left center;">Die Maße a und c gelten jeweils ab der linken unteren Ecke der</div><div style="position:absolute;left:466px;top:393.0px;font-size:5.68px;line-height:6.8px;color:#222;font-weight:normal;white-space:nowrap;transform:scaleX(0.862);transform-origin:left center;">Seitenfläche auf die das jeweilige Chassis montiert ist.</div><div style="position:absolute;left:466px;top:406.3px;font-size:5.68px;line-height:6.8px;color:#222;font-weight:normal;white-space:nowrap;transform:scaleX(0.862);transform-origin:left center;">Maß h</div><div style="position:absolute;left:502.5px;top:404.2px;width:20px;height:10px;background:#fff;border:1px solid #a4a4a4;box-sizing:border-box;"></div><div style="position:absolute;left:504.5px;top:406.2px;font-size:5.68px;line-height:6.8px;color:#222;font-weight:normal;white-space:nowrap;transform:scaleX(0.862);transform-origin:left center;">250</div><div style="position:absolute;left:524px;top:406.3px;font-size:5.68px;line-height:6.8px;color:#222;font-weight:normal;white-space:nowrap;transform:scaleX(0.862);transform-origin:left center;">cm</div><div style="position:absolute;left:546px;top:406.3px;font-size:5.68px;line-height:6.8px;color:#222;font-weight:normal;white-space:nowrap;transform:scaleX(0.862);transform-origin:left center;">Maß b</div><div style="position:absolute;left:575.3px;top:404.2px;width:20px;height:10px;background:#fff;border:1px solid #a4a4a4;box-sizing:border-box;"></div><div style="position:absolute;left:577.3px;top:406.2px;font-size:5.68px;line-height:6.8px;color:#222;font-weight:normal;white-space:nowrap;transform:scaleX(0.862);transform-origin:left center;">200</div><div style="position:absolute;left:597px;top:406.3px;font-size:5.68px;line-height:6.8px;color:#222;font-weight:normal;white-space:nowrap;transform:scaleX(0.862);transform-origin:left center;">cm</div><div style="position:absolute;left:466px;top:417.3px;font-size:5.68px;line-height:6.8px;color:#222;font-weight:normal;white-space:nowrap;transform:scaleX(0.862);transform-origin:left center;">Maß t</div><div style="position:absolute;left:502.5px;top:415.2px;width:20px;height:10px;background:#fff;border:1px solid #a4a4a4;box-sizing:border-box;"></div><div style="position:absolute;left:504.5px;top:417.2px;font-size:5.68px;line-height:6.8px;color:#222;font-weight:normal;white-space:nowrap;transform:scaleX(0.862);transform-origin:left center;">6</div><div style="position:absolute;left:524px;top:417.3px;font-size:5.68px;line-height:6.8px;color:#222;font-weight:normal;white-space:nowrap;transform:scaleX(0.862);transform-origin:left center;">cm</div><div style="position:absolute;left:466px;top:430.4px;font-size:5.68px;line-height:6.8px;color:#222;font-weight:normal;white-space:nowrap;transform:scaleX(0.862);transform-origin:left center;">Fasen an der Frontwand</div><div style="position:absolute;left:466px;top:441.0px;font-size:5.68px;line-height:6.8px;color:#222;font-weight:normal;white-space:nowrap;transform:scaleX(0.862);transform-origin:left center;">Fase links</div><div style="position:absolute;left:502.5px;top:439.5px;width:20px;height:10px;background:#fff;border:1px solid #a4a4a4;box-sizing:border-box;"></div><div style="position:absolute;left:504.5px;top:441.5px;font-size:5.68px;line-height:6.8px;color:#222;font-weight:normal;white-space:nowrap;transform:scaleX(0.862);transform-origin:left center;">0</div><div style="position:absolute;left:524px;top:441.0px;font-size:5.68px;line-height:6.8px;color:#222;font-weight:normal;white-space:nowrap;transform:scaleX(0.862);transform-origin:left center;">cm</div><div style="position:absolute;left:539px;top:441.0px;font-size:5.68px;line-height:6.8px;color:#222;font-weight:normal;white-space:nowrap;transform:scaleX(0.862);transform-origin:left center;">Fase rechts</div><div style="position:absolute;left:575.3px;top:439.5px;width:20px;height:10px;background:#fff;border:1px solid #a4a4a4;box-sizing:border-box;"></div><div style="position:absolute;left:577.3px;top:441.5px;font-size:5.68px;line-height:6.8px;color:#222;font-weight:normal;white-space:nowrap;transform:scaleX(0.862);transform-origin:left center;">0</div><div style="position:absolute;left:597px;top:441.0px;font-size:5.68px;line-height:6.8px;color:#222;font-weight:normal;white-space:nowrap;transform:scaleX(0.862);transform-origin:left center;">cm</div><div style="position:absolute;left:466px;top:451.5px;font-size:5.68px;line-height:6.8px;color:#222;font-weight:normal;white-space:nowrap;transform:scaleX(0.862);transform-origin:left center;">Fase oben</div><div style="position:absolute;left:502.5px;top:450px;width:20px;height:10px;background:#fff;border:1px solid #a4a4a4;box-sizing:border-box;"></div><div style="position:absolute;left:504.5px;top:452.0px;font-size:5.68px;line-height:6.8px;color:#222;font-weight:normal;white-space:nowrap;transform:scaleX(0.862);transform-origin:left center;">0</div><div style="position:absolute;left:524px;top:451.5px;font-size:5.68px;line-height:6.8px;color:#222;font-weight:normal;white-space:nowrap;transform:scaleX(0.862);transform-origin:left center;">cm</div><div style="position:absolute;left:539px;top:451.5px;font-size:5.68px;line-height:6.8px;color:#222;font-weight:normal;white-space:nowrap;transform:scaleX(0.862);transform-origin:left center;">Fase unten</div><div style="position:absolute;left:575.3px;top:450px;width:20px;height:10px;background:#fff;border:1px solid #a4a4a4;box-sizing:border-box;"></div><div style="position:absolute;left:577.3px;top:452.0px;font-size:5.68px;line-height:6.8px;color:#222;font-weight:normal;white-space:nowrap;transform:scaleX(0.862);transform-origin:left center;">0</div><div style="position:absolute;left:597px;top:451.5px;font-size:5.68px;line-height:6.8px;color:#222;font-weight:normal;white-space:nowrap;transform:scaleX(0.862);transform-origin:left center;">cm</div><div style="position:absolute;left:622.5px;top:246.5px;width:148px;height:219px;background:#ffffff;border:1px solid #d8d8d8;box-sizing:border-box;"></div><div style="position:absolute;left:623.5px;top:238.5px;width:37px;height:9px;background:#ffffff;border:1px solid #d8d8d8;box-sizing:border-box;border-bottom:none;"></div><div style="position:absolute;left:625px;top:239.6px;font-size:5.68px;line-height:6.8px;color:#222;font-weight:normal;white-space:nowrap;transform:scaleX(0.862);transform-origin:left center;">Chassis 1 bis 2</div><div style="position:absolute;left:625.5px;top:248.5px;width:72px;height:116px;background:#f0f0f0;"></div><div style="position:absolute;left:700px;top:248.5px;width:70px;height:116px;background:#f0f0f0;"></div><div style="position:absolute;left:627.5px;top:252.5px;width:69.5px;height:110px;background:transparent;border:1px solid #dcdcdc;box-sizing:border-box;"></div><div style="position:absolute;left:702px;top:252.5px;width:70px;height:110px;background:transparent;border:1px solid #dcdcdc;box-sizing:border-box;"></div><div style="position:absolute;left:630.5px;top:249.4px;font-size:5.68px;line-height:6.8px;color:#222;font-weight:normal;white-space:nowrap;transform:scaleX(0.862);transform-origin:left center;background:#f0f0f0;padding:0 1px;">WF 130 ND - 8 Ohm (1)</div><div style="position:absolute;left:704px;top:249.4px;font-size:5.68px;line-height:6.8px;color:#222;font-weight:normal;white-space:nowrap;transform:scaleX(0.862);transform-origin:left center;background:#f0f0f0;padding:0 1px;">FRS 8 M - 8 Ohm (2)</div><div style="position:absolute;left:633.5px;top:258px;width:6.8px;height:6.5px;background:#fff;border:0.7px solid #6a6a6a;box-sizing:border-box;"></div><svg style="position:absolute;left:633.5px;top:258px" width="7" height="7"><polyline points="1.4,3.3 2.9,4.8 5.5,1.6" fill="none" stroke="#333" stroke-width="0.8"/></svg><div style="position:absolute;left:641.5px;top:258.0px;font-size:5.68px;line-height:6.8px;color:#222;font-weight:normal;white-space:nowrap;transform:scaleX(0.862);transform-origin:left center;">gem. Außengehäuse</div><div style="position:absolute;left:633.5px;top:268.0px;font-size:5.68px;line-height:6.8px;color:#222;font-weight:normal;white-space:nowrap;transform:scaleX(0.862);transform-origin:left center;">Abstrahlrichtung</div><div style="position:absolute;left:633.5px;top:275.6px;width:52px;height:9px;background:#e5e5e5;border:1px solid #cfcfcf;box-sizing:border-box;"></div><div style="position:absolute;left:635.5px;top:277.0px;font-size:5.68px;line-height:6.8px;color:#222;font-weight:normal;white-space:nowrap;transform:scaleX(0.862);transform-origin:left center;">nach vorn</div><svg style="position:absolute;left:677.5px;top:278.5px" width="5" height="4"><polyline points="0.5,0.5 2.5,2.5 4.5,0.5" fill="none" stroke="#555" stroke-width="0.8"/></svg><div style="position:absolute;left:707px;top:258px;width:6.8px;height:6.5px;background:#fff;border:0.7px solid #6a6a6a;box-sizing:border-box;"></div><svg style="position:absolute;left:707px;top:258px" width="7" height="7"><polyline points="1.4,3.3 2.9,4.8 5.5,1.6" fill="none" stroke="#333" stroke-width="0.8"/></svg><div style="position:absolute;left:715px;top:258.0px;font-size:5.68px;line-height:6.8px;color:#222;font-weight:normal;white-space:nowrap;transform:scaleX(0.862);transform-origin:left center;">gem. Außengehäuse</div><div style="position:absolute;left:707px;top:268.0px;font-size:5.68px;line-height:6.8px;color:#222;font-weight:normal;white-space:nowrap;transform:scaleX(0.862);transform-origin:left center;">Abstrahlrichtung</div><div style="position:absolute;left:707px;top:275.6px;width:52px;height:9px;background:#e5e5e5;border:1px solid #cfcfcf;box-sizing:border-box;"></div><div style="position:absolute;left:709px;top:277.0px;font-size:5.68px;line-height:6.8px;color:#222;font-weight:normal;white-space:nowrap;transform:scaleX(0.862);transform-origin:left center;">nach vorn</div><svg style="position:absolute;left:751px;top:278.5px" width="5" height="4"><polyline points="0.5,0.5 2.5,2.5 4.5,0.5" fill="none" stroke="#555" stroke-width="0.8"/></svg><div style="position:absolute;left:633.5px;top:288.0px;font-size:5.68px;line-height:6.8px;color:#222;font-weight:normal;white-space:nowrap;transform:scaleX(0.862);transform-origin:left center;">Maß a</div><div style="position:absolute;left:652.4px;top:286px;width:22.5px;height:10px;background:#fff;border:1px solid #a4a4a4;box-sizing:border-box;"></div><div style="position:absolute;left:654.4px;top:288.0px;font-size:5.68px;line-height:6.8px;color:#222;font-weight:normal;white-space:nowrap;transform:scaleX(0.862);transform-origin:left center;">100</div><div style="position:absolute;left:678px;top:288.0px;font-size:5.68px;line-height:6.8px;color:#222;font-weight:normal;white-space:nowrap;transform:scaleX(0.862);transform-origin:left center;">cm</div><div style="position:absolute;left:633.5px;top:299.0px;font-size:5.68px;line-height:6.8px;color:#222;font-weight:normal;white-space:nowrap;transform:scaleX(0.862);transform-origin:left center;">Maß c</div><div style="position:absolute;left:652.4px;top:297px;width:22.5px;height:10px;background:#fff;border:1px solid #a4a4a4;box-sizing:border-box;"></div><div style="position:absolute;left:654.4px;top:299.0px;font-size:5.68px;line-height:6.8px;color:#222;font-weight:normal;white-space:nowrap;transform:scaleX(0.862);transform-origin:left center;">100</div><div style="position:absolute;left:678px;top:299.0px;font-size:5.68px;line-height:6.8px;color:#222;font-weight:normal;white-space:nowrap;transform:scaleX(0.862);transform-origin:left center;">cm</div><div style="position:absolute;left:707px;top:288.0px;font-size:5.68px;line-height:6.8px;color:#222;font-weight:normal;white-space:nowrap;transform:scaleX(0.862);transform-origin:left center;">Maß a</div><div style="position:absolute;left:726px;top:286px;width:22.5px;height:10px;background:#fff;border:1px solid #a4a4a4;box-sizing:border-box;"></div><div style="position:absolute;left:728px;top:288.0px;font-size:5.68px;line-height:6.8px;color:#222;font-weight:normal;white-space:nowrap;transform:scaleX(0.862);transform-origin:left center;">90</div><div style="position:absolute;left:752px;top:288.0px;font-size:5.68px;line-height:6.8px;color:#222;font-weight:normal;white-space:nowrap;transform:scaleX(0.862);transform-origin:left center;">cm</div><div style="position:absolute;left:707px;top:299.0px;font-size:5.68px;line-height:6.8px;color:#222;font-weight:normal;white-space:nowrap;transform:scaleX(0.862);transform-origin:left center;">Maß c</div><div style="position:absolute;left:726px;top:297px;width:22.5px;height:10px;background:#fff;border:1px solid #a4a4a4;box-sizing:border-box;"></div><div style="position:absolute;left:728px;top:299.0px;font-size:5.68px;line-height:6.8px;color:#222;font-weight:normal;white-space:nowrap;transform:scaleX(0.862);transform-origin:left center;">100</div><div style="position:absolute;left:752px;top:299.0px;font-size:5.68px;line-height:6.8px;color:#222;font-weight:normal;white-space:nowrap;transform:scaleX(0.862);transform-origin:left center;">cm</div><div style="position:absolute;left:632px;top:309.5px;font-size:5.68px;line-height:6.8px;color:#222;font-weight:normal;white-space:nowrap;transform:scaleX(0.862);transform-origin:left center;">Abstrahlrichtung für Schall</div><div style="position:absolute;left:632px;top:315.3px;font-size:5.68px;line-height:6.8px;color:#222;font-weight:normal;white-space:nowrap;transform:scaleX(0.862);transform-origin:left center;">von Membranrückseite</div><div style="position:absolute;left:632px;top:321.0px;font-size:5.68px;line-height:6.8px;color:#222;font-weight:normal;white-space:nowrap;transform:scaleX(0.862);transform-origin:left center;">(Baßreflexkanal)</div><div style="position:absolute;left:629.2px;top:328.5px;width:64px;height:9px;background:#e5e5e5;border:1px solid #cfcfcf;box-sizing:border-box;"></div><div style="position:absolute;left:631px;top:330.0px;font-size:5.68px;line-height:6.8px;color:#222;font-weight:normal;white-space:nowrap;transform:scaleX(0.862);transform-origin:left center;">gleiche Seite wie Chassi</div><svg style="position:absolute;left:686px;top:331.5px" width="5" height="4"><polyline points="0.5,0.5 2.5,2.5 4.5,0.5" fill="none" stroke="#555" stroke-width="0.8"/></svg><div style="position:absolute;left:633.5px;top:341.0px;font-size:5.68px;line-height:6.8px;color:#222;font-weight:normal;white-space:nowrap;transform:scaleX(0.862);transform-origin:left center;">Maß a</div><div style="position:absolute;left:652.4px;top:339px;width:22.5px;height:10px;background:#fff;border:1px solid #a4a4a4;box-sizing:border-box;"></div><div style="position:absolute;left:654.4px;top:341.0px;font-size:5.68px;line-height:6.8px;color:#222;font-weight:normal;white-space:nowrap;transform:scaleX(0.862);transform-origin:left center;">150</div><div style="position:absolute;left:678px;top:341.0px;font-size:5.68px;line-height:6.8px;color:#222;font-weight:normal;white-space:nowrap;transform:scaleX(0.862);transform-origin:left center;">cm</div><div style="position:absolute;left:633.5px;top:352.0px;font-size:5.68px;line-height:6.8px;color:#222;font-weight:normal;white-space:nowrap;transform:scaleX(0.862);transform-origin:left center;">Maß c</div><div style="position:absolute;left:652.4px;top:350px;width:22.5px;height:10px;background:#fff;border:1px solid #a4a4a4;box-sizing:border-box;"></div><div style="position:absolute;left:654.4px;top:352.0px;font-size:5.68px;line-height:6.8px;color:#222;font-weight:normal;white-space:nowrap;transform:scaleX(0.862);transform-origin:left center;">100</div><div style="position:absolute;left:678px;top:352.0px;font-size:5.68px;line-height:6.8px;color:#222;font-weight:normal;white-space:nowrap;transform:scaleX(0.862);transform-origin:left center;">cm</div>
</div></body></html>
